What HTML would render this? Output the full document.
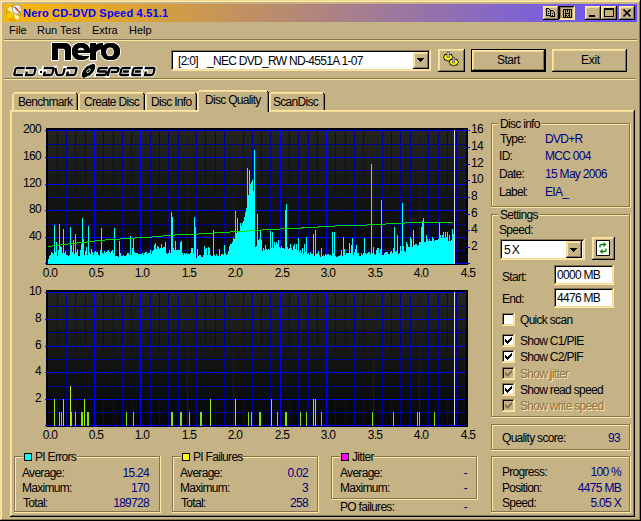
<!DOCTYPE html>
<html><head><meta charset="utf-8"><style>
html,body{margin:0;padding:0;width:641px;height:521px;overflow:hidden;background:#C5B386}
body>div{position:absolute}
.t{position:absolute;white-space:pre}
svg{position:absolute;overflow:visible}
</style></head><body>
<div style="left:0px;top:0px;width:641px;height:521px;background:#C5B386;"></div>
<div style="left:0px;top:0px;width:640px;height:1px;background:#F4DA96;"></div>
<div style="left:0px;top:0px;width:1px;height:520px;background:#F4DA96;"></div>
<div style="left:0px;top:520px;width:641px;height:1px;background:#000000;"></div>
<div style="left:640px;top:0px;width:1px;height:521px;background:#000000;"></div>
<div style="left:1px;top:1px;width:638px;height:1px;background:#FFE7A4;"></div>
<div style="left:1px;top:1px;width:1px;height:518px;background:#FFE7A4;"></div>
<div style="left:1px;top:519px;width:639px;height:1px;background:#857652;"></div>
<div style="left:639px;top:1px;width:1px;height:519px;background:#857652;"></div>
<div style="left:4px;top:4px;width:633px;height:18px;background:#C5B386;background:linear-gradient(to right,#FAB800,#6450FF);"></div>
<svg style="left:5px;top:5px" width="17" height="17" viewBox="0 0 17 17">
<circle cx="8.5" cy="8.2" r="7.3" fill="#E8B800" stroke="#A88000" stroke-width="0.7"/>
<path d="M8.5 8.2 L2.2 4.5 A7.3 7.3 0 0 1 6 1.3 Z" fill="#FFF5B0"/>
<path d="M8.5 8.2 L14.8 11.9 A7.3 7.3 0 0 1 11 15.1 Z" fill="#FFF5B0"/>
<path d="M8.5 8.2 L1.2 8.6 A7.3 7.3 0 0 0 4 14 Z" fill="#F8D000"/>
<circle cx="12" cy="4.4" r="4.6" fill="#EEF0F4" stroke="#8090A0" stroke-width="0.7"/>
<path d="M10 2.3 L13.6 6.2" stroke="#E02000" stroke-width="1.3"/>
<circle cx="14.2" cy="6.8" r="0.9" fill="#E02000"/>
<circle cx="9" cy="2.5" r="0.5" fill="#E06040"/><circle cx="15" cy="3" r="0.5" fill="#E06040"/>
</svg>
<div class="t" style="left:23px;top:7px;color:#0000FF;font:bold 11px/13px 'Liberation Sans',sans-serif;letter-spacing:0.2px;">Nero CD-DVD Speed 4.51.1</div>
<div style="left:543px;top:6px;width:16px;height:14px;background:#C5B386;"></div>
<div style="left:543px;top:6px;width:15px;height:1px;background:#FFE7A4;"></div>
<div style="left:543px;top:6px;width:1px;height:13px;background:#FFE7A4;"></div>
<div style="left:543px;top:19px;width:16px;height:1px;background:#000000;"></div>
<div style="left:558px;top:6px;width:1px;height:14px;background:#000000;"></div>
<div style="left:544px;top:7px;width:13px;height:1px;background:#F4DA96;"></div>
<div style="left:544px;top:7px;width:1px;height:11px;background:#F4DA96;"></div>
<div style="left:544px;top:18px;width:14px;height:1px;background:#857652;"></div>
<div style="left:557px;top:7px;width:1px;height:12px;background:#857652;"></div>
<div style="left:559px;top:6px;width:16px;height:14px;background:#C5B386;"></div>
<div style="left:559px;top:6px;width:15px;height:1px;background:#000000;"></div>
<div style="left:559px;top:6px;width:1px;height:13px;background:#000000;"></div>
<div style="left:559px;top:19px;width:16px;height:1px;background:#FFE7A4;"></div>
<div style="left:574px;top:6px;width:1px;height:14px;background:#FFE7A4;"></div>
<div style="left:560px;top:7px;width:13px;height:1px;background:#857652;"></div>
<div style="left:560px;top:7px;width:1px;height:11px;background:#857652;"></div>
<div style="left:560px;top:18px;width:14px;height:1px;background:#F4DA96;"></div>
<div style="left:573px;top:7px;width:1px;height:12px;background:#F4DA96;"></div>
<div style="left:585px;top:6px;width:16px;height:14px;background:#C5B386;"></div>
<div style="left:585px;top:6px;width:15px;height:1px;background:#FFE7A4;"></div>
<div style="left:585px;top:6px;width:1px;height:13px;background:#FFE7A4;"></div>
<div style="left:585px;top:19px;width:16px;height:1px;background:#000000;"></div>
<div style="left:600px;top:6px;width:1px;height:14px;background:#000000;"></div>
<div style="left:586px;top:7px;width:13px;height:1px;background:#F4DA96;"></div>
<div style="left:586px;top:7px;width:1px;height:11px;background:#F4DA96;"></div>
<div style="left:586px;top:18px;width:14px;height:1px;background:#857652;"></div>
<div style="left:599px;top:7px;width:1px;height:12px;background:#857652;"></div>
<div style="left:601px;top:6px;width:16px;height:14px;background:#C5B386;"></div>
<div style="left:601px;top:6px;width:15px;height:1px;background:#FFE7A4;"></div>
<div style="left:601px;top:6px;width:1px;height:13px;background:#FFE7A4;"></div>
<div style="left:601px;top:19px;width:16px;height:1px;background:#000000;"></div>
<div style="left:616px;top:6px;width:1px;height:14px;background:#000000;"></div>
<div style="left:602px;top:7px;width:13px;height:1px;background:#F4DA96;"></div>
<div style="left:602px;top:7px;width:1px;height:11px;background:#F4DA96;"></div>
<div style="left:602px;top:18px;width:14px;height:1px;background:#857652;"></div>
<div style="left:615px;top:7px;width:1px;height:12px;background:#857652;"></div>
<div style="left:619px;top:6px;width:16px;height:14px;background:#C5B386;"></div>
<div style="left:619px;top:6px;width:15px;height:1px;background:#FFE7A4;"></div>
<div style="left:619px;top:6px;width:1px;height:13px;background:#FFE7A4;"></div>
<div style="left:619px;top:19px;width:16px;height:1px;background:#000000;"></div>
<div style="left:634px;top:6px;width:1px;height:14px;background:#000000;"></div>
<div style="left:620px;top:7px;width:13px;height:1px;background:#F4DA96;"></div>
<div style="left:620px;top:7px;width:1px;height:11px;background:#F4DA96;"></div>
<div style="left:620px;top:18px;width:14px;height:1px;background:#857652;"></div>
<div style="left:633px;top:7px;width:1px;height:12px;background:#857652;"></div>
<svg style="left:0;top:0" width="641" height="30" shape-rendering="crispEdges"><g fill="#000"><rect x="546" y="8" width="1" height="1"/><rect x="547" y="8" width="1" height="1"/><rect x="548" y="8" width="1" height="1"/><rect x="549" y="9" width="1" height="1"/><rect x="550" y="10" width="1" height="1"/><rect x="550" y="11" width="1" height="1"/><rect x="550" y="12" width="1" height="1"/><rect x="550" y="13" width="1" height="1"/><rect x="550" y="14" width="1" height="1"/><rect x="550" y="15" width="1" height="1"/><rect x="546" y="15" width="1" height="1"/><rect x="547" y="15" width="1" height="1"/><rect x="548" y="15" width="1" height="1"/><rect x="549" y="15" width="1" height="1"/><rect x="550" y="15" width="1" height="1"/><rect x="546" y="8" width="1" height="1"/><rect x="546" y="9" width="1" height="1"/><rect x="546" y="10" width="1" height="1"/><rect x="546" y="11" width="1" height="1"/><rect x="546" y="12" width="1" height="1"/><rect x="546" y="13" width="1" height="1"/><rect x="546" y="14" width="1" height="1"/><rect x="546" y="15" width="1" height="1"/><rect x="548" y="11" width="1" height="1"/><rect x="548" y="13" width="1" height="1"/><rect x="550" y="10" width="1" height="1"/><rect x="551" y="10" width="1" height="1"/><rect x="552" y="10" width="1" height="1"/><rect x="553" y="11" width="1" height="1"/><rect x="554" y="12" width="1" height="1"/><rect x="554" y="13" width="1" height="1"/><rect x="554" y="14" width="1" height="1"/><rect x="554" y="15" width="1" height="1"/><rect x="554" y="16" width="1" height="1"/><rect x="550" y="16" width="1" height="1"/><rect x="551" y="16" width="1" height="1"/><rect x="552" y="16" width="1" height="1"/><rect x="553" y="16" width="1" height="1"/><rect x="554" y="16" width="1" height="1"/><rect x="550" y="10" width="1" height="1"/><rect x="550" y="11" width="1" height="1"/><rect x="550" y="12" width="1" height="1"/><rect x="550" y="13" width="1" height="1"/><rect x="550" y="14" width="1" height="1"/><rect x="550" y="15" width="1" height="1"/><rect x="550" y="16" width="1" height="1"/><rect x="552" y="13" width="1" height="1"/><rect x="552" y="15" width="1" height="1"/><rect x="563" y="9" width="1" height="1"/><rect x="564" y="9" width="1" height="1"/><rect x="565" y="9" width="1" height="1"/><rect x="566" y="9" width="1" height="1"/><rect x="567" y="9" width="1" height="1"/><rect x="568" y="9" width="1" height="1"/><rect x="569" y="9" width="1" height="1"/><rect x="570" y="9" width="1" height="1"/><rect x="571" y="9" width="1" height="1"/><rect x="563" y="17" width="1" height="1"/><rect x="564" y="17" width="1" height="1"/><rect x="565" y="17" width="1" height="1"/><rect x="566" y="17" width="1" height="1"/><rect x="567" y="17" width="1" height="1"/><rect x="568" y="17" width="1" height="1"/><rect x="569" y="17" width="1" height="1"/><rect x="570" y="17" width="1" height="1"/><rect x="571" y="17" width="1" height="1"/><rect x="563" y="9" width="1" height="1"/><rect x="563" y="10" width="1" height="1"/><rect x="563" y="11" width="1" height="1"/><rect x="563" y="12" width="1" height="1"/><rect x="563" y="13" width="1" height="1"/><rect x="563" y="14" width="1" height="1"/><rect x="563" y="15" width="1" height="1"/><rect x="563" y="16" width="1" height="1"/><rect x="563" y="17" width="1" height="1"/><rect x="571" y="9" width="1" height="1"/><rect x="571" y="10" width="1" height="1"/><rect x="571" y="11" width="1" height="1"/><rect x="571" y="12" width="1" height="1"/><rect x="571" y="13" width="1" height="1"/><rect x="571" y="14" width="1" height="1"/><rect x="571" y="15" width="1" height="1"/><rect x="571" y="16" width="1" height="1"/><rect x="571" y="17" width="1" height="1"/><rect x="565" y="10" width="1" height="1"/><rect x="565" y="11" width="1" height="1"/><rect x="565" y="12" width="1" height="1"/><rect x="565" y="13" width="1" height="1"/><rect x="565" y="14" width="1" height="1"/><rect x="565" y="15" width="1" height="1"/><rect x="565" y="16" width="1" height="1"/><rect x="569" y="10" width="1" height="1"/><rect x="569" y="11" width="1" height="1"/><rect x="569" y="12" width="1" height="1"/><rect x="569" y="13" width="1" height="1"/><rect x="569" y="14" width="1" height="1"/><rect x="569" y="15" width="1" height="1"/><rect x="569" y="16" width="1" height="1"/><rect x="565" y="13" width="1" height="1"/><rect x="566" y="13" width="1" height="1"/><rect x="567" y="13" width="1" height="1"/><rect x="568" y="13" width="1" height="1"/><rect x="569" y="13" width="1" height="1"/><rect x="567" y="10" width="1" height="1"/><rect x="567" y="11" width="1" height="1"/><rect x="566" y="15" width="1" height="1"/><rect x="567" y="16" width="1" height="1"/><rect x="568" y="15" width="1" height="1"/></g></svg>
<div style="left:589px;top:15px;width:6px;height:2px;background:#000;"></div>
<svg style="left:601px;top:6px" width="16" height="14" viewBox="0 0 16 14" shape-rendering="crispEdges">
<path d="M3.5 2.5h9v8h-9z" fill="none" stroke="#000" stroke-width="1"/><rect x="3" y="2" width="10" height="2" fill="#000"/>
</svg>
<svg style="left:619px;top:6px" width="16" height="14" viewBox="0 0 16 14">
<path d="M4.5 3.5 L11.5 10.5 M11.5 3.5 L4.5 10.5" stroke="#000" stroke-width="1.7"/>
</svg>
<div class="t" style="left:9px;top:24px;color:#000;font:11px/13px 'Liberation Sans',sans-serif;letter-spacing:0px;">File</div>
<div class="t" style="left:37px;top:24px;color:#000;font:11px/13px 'Liberation Sans',sans-serif;letter-spacing:0px;">Run Test</div>
<div class="t" style="left:92px;top:24px;color:#000;font:11px/13px 'Liberation Sans',sans-serif;letter-spacing:0px;">Extra</div>
<div class="t" style="left:129px;top:24px;color:#000;font:11px/13px 'Liberation Sans',sans-serif;letter-spacing:0px;">Help</div>
<div style="left:4px;top:39px;width:633px;height:1px;background:#857652;"></div>
<div style="left:4px;top:40px;width:633px;height:1px;background:#FFE7A4;"></div>
<svg style="left:0;top:0" width="170" height="82" viewBox="0 0 170 82">
<path d="M52 60V43H64.5Q71 43 71 49.5V60H65V50.5Q65 48.5 63 48.5H58V60ZM90 53V52Q90 43 81 43Q72 43 72 51.5Q72 60 81 60Q87 60 89.5 56H83Q82 55.5 81 55.5Q78 55.5 77.5 53ZM77.6 50.5Q78 47.5 81 47.5Q84 47.5 84.4 50.5ZM90 60V43H96V45Q98 43 103 43V49Q98 49 96 52V60ZM110.5 43Q120 43 120 51.5Q120 60 110.5 60Q101 60 101 51.5Q101 43 110.5 43ZM110 47.3Q106 47.3 106 51.8Q106 56.5 110 56.5Q114 56.5 114 51.8Q114 47.3 110 47.3Z" fill="#000" stroke="#fff" stroke-width="2" stroke-linejoin="round" paint-order="stroke"/>
<path d="M52 60V43H64.5Q71 43 71 49.5V60H65V50.5Q65 48.5 63 48.5H58V60ZM90 53V52Q90 43 81 43Q72 43 72 51.5Q72 60 81 60Q87 60 89.5 56H83Q82 55.5 81 55.5Q78 55.5 77.5 53ZM77.6 50.5Q78 47.5 81 47.5Q84 47.5 84.4 50.5ZM90 60V43H96V45Q98 43 103 43V49Q98 49 96 52V60ZM110.5 43Q120 43 120 51.5Q120 60 110.5 60Q101 60 101 51.5Q101 43 110.5 43ZM110 47.3Q106 47.3 106 51.8Q106 56.5 110 56.5Q114 56.5 114 51.8Q114 47.3 110 47.3Z" fill="#000"/>
<g fill="none" stroke="#fff" stroke-width="4" stroke-linejoin="round" stroke-linecap="square"><path transform="translate(15,67) skewX(-14)" d="M10 1H2.5Q1 1 1 2.5V6.5Q1 8 2.5 8H10"/><path transform="translate(26,67) skewX(-14)" d="M0 1H8.5Q10 1 10 2.5V6.5Q10 8 8.5 8H2V4.5"/><path transform="translate(44,67) skewX(-14)" d="M0 1H8.5Q10 1 10 2.5V6.5Q10 8 8.5 8H2V4.5"/><path transform="translate(55,67) skewX(-14)" d="M0.5 1L3.5 7Q4 8 5.5 8H8.5Q10 8 10 6.5V1"/><path transform="translate(67,67) skewX(-14)" d="M0 1H8.5Q10 1 10 2.5V6.5Q10 8 8.5 8H2V4.5"/><path transform="translate(98,67) skewX(-14)" d="M10 1H2.5Q1 1 1 2.5V3Q1 4.5 2.5 4.5H8.5Q10 4.5 10 6V6.5Q10 8 8.5 8H0"/><path transform="translate(109,67) skewX(-14)" d="M1 9V2.5Q1 1 2.5 1H8.5Q10 1 10 2.5V3.5Q10 5 8.5 5H3"/><path transform="translate(121,67) skewX(-14)" d="M10 1H2.5Q1 1 1 2.5V6.5Q1 8 2.5 8H10M3 4.5H9"/><path transform="translate(133,67) skewX(-14)" d="M10 1H2.5Q1 1 1 2.5V6.5Q1 8 2.5 8H10M3 4.5H9"/><path transform="translate(145,67) skewX(-14)" d="M0 1H8.5Q10 1 10 2.5V6.5Q10 8 8.5 8H2V4.5"/><rect x="40" y="71" width="2" height="2"/></g>
<g fill="none" stroke="#000" stroke-width="2.3" stroke-linecap="butt"><path transform="translate(15,67) skewX(-14)" d="M10 1H2.5Q1 1 1 2.5V6.5Q1 8 2.5 8H10"/><path transform="translate(26,67) skewX(-14)" d="M0 1H8.5Q10 1 10 2.5V6.5Q10 8 8.5 8H2V4.5"/><path transform="translate(44,67) skewX(-14)" d="M0 1H8.5Q10 1 10 2.5V6.5Q10 8 8.5 8H2V4.5"/><path transform="translate(55,67) skewX(-14)" d="M0.5 1L3.5 7Q4 8 5.5 8H8.5Q10 8 10 6.5V1"/><path transform="translate(67,67) skewX(-14)" d="M0 1H8.5Q10 1 10 2.5V6.5Q10 8 8.5 8H2V4.5"/><path transform="translate(98,67) skewX(-14)" d="M10 1H2.5Q1 1 1 2.5V3Q1 4.5 2.5 4.5H8.5Q10 4.5 10 6V6.5Q10 8 8.5 8H0"/><path transform="translate(109,67) skewX(-14)" d="M1 9V2.5Q1 1 2.5 1H8.5Q10 1 10 2.5V3.5Q10 5 8.5 5H3"/><path transform="translate(121,67) skewX(-14)" d="M10 1H2.5Q1 1 1 2.5V6.5Q1 8 2.5 8H10M3 4.5H9"/><path transform="translate(133,67) skewX(-14)" d="M10 1H2.5Q1 1 1 2.5V6.5Q1 8 2.5 8H10M3 4.5H9"/><path transform="translate(145,67) skewX(-14)" d="M0 1H8.5Q10 1 10 2.5V6.5Q10 8 8.5 8H2V4.5"/></g>
<rect x="40" y="71" width="2" height="2" fill="#000"/>
<g transform="translate(88.5,70.8) rotate(-47)">
<ellipse rx="9.4" ry="4.9" fill="#000" stroke="#fff" stroke-width="1.1"/>
<ellipse cx="0" cy="0" rx="2.3" ry="1.2" fill="none" stroke="#fff" stroke-width="0.8"/>
<path d="M3.5 -3.6Q6 -3.3 7.5 -2" fill="none" stroke="#ddd" stroke-width="0.9"/>
<path d="M-3.5 3.6Q-6 3.3 -7.5 2" fill="none" stroke="#ddd" stroke-width="0.9"/>
</g>
</svg>
<div style="left:171px;top:50px;width:260px;height:21px;background:#FFFFFF;"></div>
<div style="left:171px;top:50px;width:259px;height:1px;background:#857652;"></div>
<div style="left:171px;top:50px;width:1px;height:20px;background:#857652;"></div>
<div style="left:171px;top:70px;width:260px;height:1px;background:#FFE7A4;"></div>
<div style="left:430px;top:50px;width:1px;height:21px;background:#FFE7A4;"></div>
<div style="left:172px;top:51px;width:257px;height:1px;background:#000000;"></div>
<div style="left:172px;top:51px;width:1px;height:18px;background:#000000;"></div>
<div style="left:172px;top:69px;width:258px;height:1px;background:#F4DA96;"></div>
<div style="left:429px;top:51px;width:1px;height:19px;background:#F4DA96;"></div>
<div class="t" style="left:178px;top:55px;color:#000;font:12px/13px 'Liberation Sans',sans-serif;letter-spacing:-0.7px;">[2:0]</div>
<div class="t" style="left:207px;top:55px;color:#000;font:12px/13px 'Liberation Sans',sans-serif;letter-spacing:-0.7px;">_NEC DVD_RW ND-4551A 1-07</div>
<div style="left:413px;top:52px;width:16px;height:17px;background:#C5B386;"></div>
<div style="left:413px;top:52px;width:15px;height:1px;background:#F4DA96;"></div>
<div style="left:413px;top:52px;width:1px;height:16px;background:#F4DA96;"></div>
<div style="left:413px;top:68px;width:16px;height:1px;background:#000000;"></div>
<div style="left:428px;top:52px;width:1px;height:17px;background:#000000;"></div>
<div style="left:414px;top:53px;width:13px;height:1px;background:#FFE7A4;"></div>
<div style="left:414px;top:53px;width:1px;height:14px;background:#FFE7A4;"></div>
<div style="left:414px;top:67px;width:14px;height:1px;background:#857652;"></div>
<div style="left:427px;top:53px;width:1px;height:15px;background:#857652;"></div>
<svg style="left:417px;top:58px" width="7" height="4" shape-rendering="crispEdges"><path d="M0 0h7v1h-1v1h-1v1h-1v1h-1v-1h-1v-1h-1v-1h-1z" fill="#000"/></svg>
<div style="left:438px;top:49px;width:27px;height:23px;background:#C5B386;"></div>
<div style="left:438px;top:49px;width:26px;height:1px;background:#FFE7A4;"></div>
<div style="left:438px;top:49px;width:1px;height:22px;background:#FFE7A4;"></div>
<div style="left:438px;top:71px;width:27px;height:1px;background:#000000;"></div>
<div style="left:464px;top:49px;width:1px;height:23px;background:#000000;"></div>
<div style="left:439px;top:50px;width:24px;height:1px;background:#F4DA96;"></div>
<div style="left:439px;top:50px;width:1px;height:20px;background:#F4DA96;"></div>
<div style="left:439px;top:70px;width:25px;height:1px;background:#857652;"></div>
<div style="left:463px;top:50px;width:1px;height:21px;background:#857652;"></div>
<svg style="left:0;top:0" width="641" height="80" viewBox="0 0 641 80">
<polygon points="453.20,57.30 451.80,58.46 451.74,60.06 449.69,60.11 448.20,61.20 446.71,60.11 444.66,60.06 444.60,58.46 443.20,57.30 444.60,56.14 444.66,54.54 446.71,54.49 448.20,53.40 449.69,54.49 451.74,54.54 451.80,56.14" fill="#FFFF00" stroke="#000" stroke-width="0.9" stroke-linejoin="round"/>
<rect x="447" y="52" width="2.4" height="5.6" fill="#B8B8C8" stroke="#404050" stroke-width="0.6"/>
<polygon points="458.80,62.20 457.40,63.36 457.34,64.96 455.29,65.01 453.80,66.10 452.31,65.01 450.26,64.96 450.20,63.36 448.80,62.20 450.20,61.04 450.26,59.44 452.31,59.39 453.80,58.30 455.29,59.39 457.34,59.44 457.40,61.04" fill="#FFFF00" stroke="#000" stroke-width="0.9" stroke-linejoin="round"/>
<rect x="452.4" y="57.3" width="2.4" height="5.6" fill="#B8B8C8" stroke="#404050" stroke-width="0.6"/>
</svg>
<div style="left:471px;top:49px;width:75px;height:23px;background:#000000;"></div>
<div style="left:472px;top:50px;width:73px;height:21px;background:#C5B386;"></div>
<div style="left:472px;top:50px;width:72px;height:1px;background:#FFE7A4;"></div>
<div style="left:472px;top:50px;width:1px;height:20px;background:#FFE7A4;"></div>
<div style="left:472px;top:70px;width:73px;height:1px;background:#000000;"></div>
<div style="left:544px;top:50px;width:1px;height:21px;background:#000000;"></div>
<div style="left:473px;top:51px;width:70px;height:1px;background:#F4DA96;"></div>
<div style="left:473px;top:51px;width:1px;height:18px;background:#F4DA96;"></div>
<div style="left:473px;top:69px;width:71px;height:1px;background:#857652;"></div>
<div style="left:543px;top:51px;width:1px;height:19px;background:#857652;"></div>
<div class="t" style="left:497px;top:54px;color:#000;font:12px/13px 'Liberation Sans',sans-serif;letter-spacing:-0.5px;">Start</div>
<div style="left:552px;top:49px;width:75px;height:23px;background:#C5B386;"></div>
<div style="left:552px;top:49px;width:74px;height:1px;background:#FFE7A4;"></div>
<div style="left:552px;top:49px;width:1px;height:22px;background:#FFE7A4;"></div>
<div style="left:552px;top:71px;width:75px;height:1px;background:#000000;"></div>
<div style="left:626px;top:49px;width:1px;height:23px;background:#000000;"></div>
<div style="left:553px;top:50px;width:72px;height:1px;background:#F4DA96;"></div>
<div style="left:553px;top:50px;width:1px;height:20px;background:#F4DA96;"></div>
<div style="left:553px;top:70px;width:73px;height:1px;background:#857652;"></div>
<div style="left:625px;top:50px;width:1px;height:21px;background:#857652;"></div>
<div class="t" style="left:581px;top:54px;color:#000;font:12px/13px 'Liberation Sans',sans-serif;letter-spacing:-0.3px;">Exit</div>
<div style="left:4px;top:78px;width:631px;height:1px;background:#857652;"></div>
<div style="left:4px;top:79px;width:631px;height:1px;background:#FFE7A4;"></div>
<div style="left:10px;top:110px;width:625px;height:407px;background:#C5B386;"></div>
<div style="left:10px;top:110px;width:624px;height:1px;background:#FFE7A4;"></div>
<div style="left:11px;top:111px;width:622px;height:1px;background:#F4DA96;"></div>
<div style="left:10px;top:110px;width:1px;height:406px;background:#FFE7A4;"></div>
<div style="left:11px;top:111px;width:1px;height:404px;background:#F4DA96;"></div>
<div style="left:10px;top:516px;width:625px;height:1px;background:#000000;"></div>
<div style="left:11px;top:515px;width:623px;height:1px;background:#857652;"></div>
<div style="left:634px;top:110px;width:1px;height:407px;background:#000000;"></div>
<div style="left:633px;top:111px;width:1px;height:405px;background:#857652;"></div>
<div style="left:12px;top:92px;width:66px;height:18px;background:#C5B386;"></div>
<div style="left:14px;top:92px;width:62px;height:1px;background:#FFE7A4;"></div>
<div style="left:13px;top:93px;width:1px;height:1px;background:#FFE7A4;"></div>
<div style="left:12px;top:94px;width:1px;height:16px;background:#FFE7A4;"></div>
<div style="left:13px;top:94px;width:1px;height:16px;background:#F4DA96;"></div>
<div style="left:14px;top:93px;width:62px;height:1px;background:#F4DA96;"></div>
<div style="left:76px;top:94px;width:1px;height:16px;background:#857652;"></div>
<div style="left:77px;top:94px;width:1px;height:16px;background:#000000;"></div>
<div style="left:76px;top:93px;width:1px;height:1px;background:#000000;"></div>
<div class="t" style="left:18px;top:96px;color:#000;font:12px/13px 'Liberation Sans',sans-serif;letter-spacing:-0.7px;">Benchmark</div>
<div style="left:78px;top:92px;width:67px;height:18px;background:#C5B386;"></div>
<div style="left:80px;top:92px;width:63px;height:1px;background:#FFE7A4;"></div>
<div style="left:79px;top:93px;width:1px;height:1px;background:#FFE7A4;"></div>
<div style="left:78px;top:94px;width:1px;height:16px;background:#FFE7A4;"></div>
<div style="left:79px;top:94px;width:1px;height:16px;background:#F4DA96;"></div>
<div style="left:80px;top:93px;width:63px;height:1px;background:#F4DA96;"></div>
<div style="left:143px;top:94px;width:1px;height:16px;background:#857652;"></div>
<div style="left:144px;top:94px;width:1px;height:16px;background:#000000;"></div>
<div style="left:143px;top:93px;width:1px;height:1px;background:#000000;"></div>
<div class="t" style="left:84px;top:96px;color:#000;font:12px/13px 'Liberation Sans',sans-serif;letter-spacing:-0.7px;">Create Disc</div>
<div style="left:145px;top:92px;width:52px;height:18px;background:#C5B386;"></div>
<div style="left:147px;top:92px;width:48px;height:1px;background:#FFE7A4;"></div>
<div style="left:146px;top:93px;width:1px;height:1px;background:#FFE7A4;"></div>
<div style="left:145px;top:94px;width:1px;height:16px;background:#FFE7A4;"></div>
<div style="left:146px;top:94px;width:1px;height:16px;background:#F4DA96;"></div>
<div style="left:147px;top:93px;width:48px;height:1px;background:#F4DA96;"></div>
<div style="left:195px;top:94px;width:1px;height:16px;background:#857652;"></div>
<div style="left:196px;top:94px;width:1px;height:16px;background:#000000;"></div>
<div style="left:195px;top:93px;width:1px;height:1px;background:#000000;"></div>
<div class="t" style="left:151px;top:96px;color:#000;font:12px/13px 'Liberation Sans',sans-serif;letter-spacing:-0.7px;">Disc Info</div>
<div style="left:269px;top:92px;width:56px;height:18px;background:#C5B386;"></div>
<div style="left:271px;top:92px;width:52px;height:1px;background:#FFE7A4;"></div>
<div style="left:270px;top:93px;width:1px;height:1px;background:#FFE7A4;"></div>
<div style="left:269px;top:94px;width:1px;height:16px;background:#FFE7A4;"></div>
<div style="left:270px;top:94px;width:1px;height:16px;background:#F4DA96;"></div>
<div style="left:271px;top:93px;width:52px;height:1px;background:#F4DA96;"></div>
<div style="left:323px;top:94px;width:1px;height:16px;background:#857652;"></div>
<div style="left:324px;top:94px;width:1px;height:16px;background:#000000;"></div>
<div style="left:323px;top:93px;width:1px;height:1px;background:#000000;"></div>
<div class="t" style="left:273px;top:96px;color:#000;font:12px/13px 'Liberation Sans',sans-serif;letter-spacing:-0.7px;">ScanDisc</div>
<div style="left:197px;top:90px;width:72px;height:22px;background:#C5B386;"></div>
<div style="left:199px;top:90px;width:68px;height:1px;background:#FFE7A4;"></div>
<div style="left:198px;top:91px;width:1px;height:1px;background:#FFE7A4;"></div>
<div style="left:197px;top:92px;width:1px;height:20px;background:#FFE7A4;"></div>
<div style="left:198px;top:92px;width:1px;height:20px;background:#F4DA96;"></div>
<div style="left:199px;top:91px;width:68px;height:1px;background:#F4DA96;"></div>
<div style="left:267px;top:92px;width:1px;height:20px;background:#857652;"></div>
<div style="left:268px;top:92px;width:1px;height:20px;background:#000000;"></div>
<div style="left:267px;top:91px;width:1px;height:1px;background:#000000;"></div>
<div class="t" style="left:205px;top:94px;color:#000;font:12px/13px 'Liberation Sans',sans-serif;letter-spacing:-0.7px;">Disc Quality</div>
<svg style="position:absolute;left:0;top:0" width="641" height="521" viewBox="0 0 641 521" shape-rendering="crispEdges">
<defs><linearGradient id="bg" x1="0" y1="0" x2="0" y2="1"><stop offset="0" stop-color="#242421"/><stop offset="1" stop-color="#060606"/></linearGradient></defs>
<rect x="46" y="128" width="422" height="137" fill="#000"/>
<rect x="48" y="130" width="418" height="134" fill="url(#bg)"/>
<rect x="57" y="130" width="1" height="135" fill="#000094"/>
<rect x="66" y="130" width="1" height="135" fill="#000094"/>
<rect x="75" y="130" width="1" height="135" fill="#000094"/>
<rect x="85" y="130" width="1" height="135" fill="#000094"/>
<rect x="94" y="130" width="1" height="135" fill="#0000FF"/>
<rect x="103" y="130" width="1" height="135" fill="#000094"/>
<rect x="113" y="130" width="1" height="135" fill="#000094"/>
<rect x="122" y="130" width="1" height="135" fill="#000094"/>
<rect x="131" y="130" width="1" height="135" fill="#000094"/>
<rect x="140" y="130" width="1" height="135" fill="#0000FF"/>
<rect x="150" y="130" width="1" height="135" fill="#000094"/>
<rect x="159" y="130" width="1" height="135" fill="#000094"/>
<rect x="168" y="130" width="1" height="135" fill="#000094"/>
<rect x="178" y="130" width="1" height="135" fill="#000094"/>
<rect x="187" y="130" width="1" height="135" fill="#0000FF"/>
<rect x="196" y="130" width="1" height="135" fill="#000094"/>
<rect x="205" y="130" width="1" height="135" fill="#000094"/>
<rect x="215" y="130" width="1" height="135" fill="#000094"/>
<rect x="224" y="130" width="1" height="135" fill="#000094"/>
<rect x="233" y="130" width="1" height="135" fill="#0000FF"/>
<rect x="243" y="130" width="1" height="135" fill="#000094"/>
<rect x="252" y="130" width="1" height="135" fill="#000094"/>
<rect x="261" y="130" width="1" height="135" fill="#000094"/>
<rect x="270" y="130" width="1" height="135" fill="#000094"/>
<rect x="280" y="130" width="1" height="135" fill="#0000FF"/>
<rect x="289" y="130" width="1" height="135" fill="#000094"/>
<rect x="298" y="130" width="1" height="135" fill="#000094"/>
<rect x="308" y="130" width="1" height="135" fill="#000094"/>
<rect x="317" y="130" width="1" height="135" fill="#000094"/>
<rect x="326" y="130" width="1" height="135" fill="#0000FF"/>
<rect x="335" y="130" width="1" height="135" fill="#000094"/>
<rect x="345" y="130" width="1" height="135" fill="#000094"/>
<rect x="354" y="130" width="1" height="135" fill="#000094"/>
<rect x="363" y="130" width="1" height="135" fill="#000094"/>
<rect x="373" y="130" width="1" height="135" fill="#0000FF"/>
<rect x="382" y="130" width="1" height="135" fill="#000094"/>
<rect x="391" y="130" width="1" height="135" fill="#000094"/>
<rect x="400" y="130" width="1" height="135" fill="#000094"/>
<rect x="410" y="130" width="1" height="135" fill="#000094"/>
<rect x="419" y="130" width="1" height="135" fill="#0000FF"/>
<rect x="428" y="130" width="1" height="135" fill="#000094"/>
<rect x="438" y="130" width="1" height="135" fill="#000094"/>
<rect x="447" y="130" width="1" height="135" fill="#000094"/>
<rect x="456" y="130" width="1" height="135" fill="#000094"/>
<rect x="45" y="263" width="421" height="1" fill="#0000FF"/>
<rect x="46" y="250" width="420" height="1" fill="#000094"/>
<rect x="45" y="237" width="421" height="1" fill="#0000FF"/>
<rect x="46" y="224" width="420" height="1" fill="#000094"/>
<rect x="45" y="210" width="421" height="1" fill="#0000FF"/>
<rect x="46" y="197" width="420" height="1" fill="#000094"/>
<rect x="45" y="184" width="421" height="1" fill="#0000FF"/>
<rect x="46" y="170" width="420" height="1" fill="#000094"/>
<rect x="45" y="157" width="421" height="1" fill="#0000FF"/>
<rect x="46" y="144" width="420" height="1" fill="#000094"/>
<rect x="45" y="130" width="421" height="1" fill="#0000FF"/>
<rect x="46" y="290" width="422" height="137" fill="#000"/>
<rect x="48" y="292" width="418" height="134" fill="url(#bg)"/>
<rect x="57" y="292" width="1" height="135" fill="#000094"/>
<rect x="66" y="292" width="1" height="135" fill="#000094"/>
<rect x="75" y="292" width="1" height="135" fill="#000094"/>
<rect x="85" y="292" width="1" height="135" fill="#000094"/>
<rect x="94" y="292" width="1" height="135" fill="#0000FF"/>
<rect x="103" y="292" width="1" height="135" fill="#000094"/>
<rect x="113" y="292" width="1" height="135" fill="#000094"/>
<rect x="122" y="292" width="1" height="135" fill="#000094"/>
<rect x="131" y="292" width="1" height="135" fill="#000094"/>
<rect x="140" y="292" width="1" height="135" fill="#0000FF"/>
<rect x="150" y="292" width="1" height="135" fill="#000094"/>
<rect x="159" y="292" width="1" height="135" fill="#000094"/>
<rect x="168" y="292" width="1" height="135" fill="#000094"/>
<rect x="178" y="292" width="1" height="135" fill="#000094"/>
<rect x="187" y="292" width="1" height="135" fill="#0000FF"/>
<rect x="196" y="292" width="1" height="135" fill="#000094"/>
<rect x="205" y="292" width="1" height="135" fill="#000094"/>
<rect x="215" y="292" width="1" height="135" fill="#000094"/>
<rect x="224" y="292" width="1" height="135" fill="#000094"/>
<rect x="233" y="292" width="1" height="135" fill="#0000FF"/>
<rect x="243" y="292" width="1" height="135" fill="#000094"/>
<rect x="252" y="292" width="1" height="135" fill="#000094"/>
<rect x="261" y="292" width="1" height="135" fill="#000094"/>
<rect x="270" y="292" width="1" height="135" fill="#000094"/>
<rect x="280" y="292" width="1" height="135" fill="#0000FF"/>
<rect x="289" y="292" width="1" height="135" fill="#000094"/>
<rect x="298" y="292" width="1" height="135" fill="#000094"/>
<rect x="308" y="292" width="1" height="135" fill="#000094"/>
<rect x="317" y="292" width="1" height="135" fill="#000094"/>
<rect x="326" y="292" width="1" height="135" fill="#0000FF"/>
<rect x="335" y="292" width="1" height="135" fill="#000094"/>
<rect x="345" y="292" width="1" height="135" fill="#000094"/>
<rect x="354" y="292" width="1" height="135" fill="#000094"/>
<rect x="363" y="292" width="1" height="135" fill="#000094"/>
<rect x="373" y="292" width="1" height="135" fill="#0000FF"/>
<rect x="382" y="292" width="1" height="135" fill="#000094"/>
<rect x="391" y="292" width="1" height="135" fill="#000094"/>
<rect x="400" y="292" width="1" height="135" fill="#000094"/>
<rect x="410" y="292" width="1" height="135" fill="#000094"/>
<rect x="419" y="292" width="1" height="135" fill="#0000FF"/>
<rect x="428" y="292" width="1" height="135" fill="#000094"/>
<rect x="438" y="292" width="1" height="135" fill="#000094"/>
<rect x="447" y="292" width="1" height="135" fill="#000094"/>
<rect x="456" y="292" width="1" height="135" fill="#000094"/>
<rect x="45" y="425" width="421" height="1" fill="#0000FF"/>
<rect x="46" y="412" width="420" height="1" fill="#000094"/>
<rect x="45" y="399" width="421" height="1" fill="#0000FF"/>
<rect x="46" y="386" width="420" height="1" fill="#000094"/>
<rect x="45" y="372" width="421" height="1" fill="#0000FF"/>
<rect x="46" y="359" width="420" height="1" fill="#000094"/>
<rect x="45" y="346" width="421" height="1" fill="#0000FF"/>
<rect x="46" y="332" width="420" height="1" fill="#000094"/>
<rect x="45" y="319" width="421" height="1" fill="#0000FF"/>
<rect x="46" y="306" width="420" height="1" fill="#000094"/>
<rect x="45" y="292" width="421" height="1" fill="#0000FF"/>
<path d="M48 259h1V264h-1ZM49 256h1V264h-1ZM50 255h1V264h-1ZM51 252h1V264h-1ZM52 253h1V264h-1ZM53 254h1V264h-1ZM54 225h1V264h-1ZM55 252h1V264h-1ZM56 242h1V264h-1ZM57 256h1V264h-1ZM58 250h1V264h-1ZM59 224h1V264h-1ZM60 246h1V264h-1ZM61 247h1V264h-1ZM62 253h1V264h-1ZM63 229h1V264h-1ZM64 253h1V264h-1ZM65 251h1V264h-1ZM66 255h1V264h-1ZM67 255h1V264h-1ZM68 256h1V264h-1ZM69 255h1V264h-1ZM70 227h1V264h-1ZM71 245h1V264h-1ZM72 252h1V264h-1ZM73 240h1V264h-1ZM74 254h1V264h-1ZM75 234h1V264h-1ZM76 252h1V264h-1ZM77 249h1V264h-1ZM78 256h1V264h-1ZM79 256h1V264h-1ZM80 250h1V264h-1ZM81 244h1V264h-1ZM82 218h1V264h-1ZM83 239h1V264h-1ZM84 255h1V264h-1ZM85 251h1V264h-1ZM86 247h1V264h-1ZM87 255h1V264h-1ZM88 226h1V264h-1ZM89 252h1V264h-1ZM90 254h1V264h-1ZM91 249h1V264h-1ZM92 252h1V264h-1ZM93 255h1V264h-1ZM94 252h1V264h-1ZM95 251h1V264h-1ZM96 252h1V264h-1ZM97 252h1V264h-1ZM98 255h1V264h-1ZM99 256h1V264h-1ZM100 250h1V264h-1ZM101 228h1V264h-1ZM102 253h1V264h-1ZM103 254h1V264h-1ZM104 251h1V264h-1ZM105 253h1V264h-1ZM106 252h1V264h-1ZM107 251h1V264h-1ZM108 250h1V264h-1ZM109 252h1V264h-1ZM110 253h1V264h-1ZM111 251h1V264h-1ZM112 250h1V264h-1ZM113 253h1V264h-1ZM114 228h1V264h-1ZM115 256h1V264h-1ZM116 256h1V264h-1ZM117 256h1V264h-1ZM118 257h1V264h-1ZM119 241h1V264h-1ZM120 253h1V264h-1ZM121 256h1V264h-1ZM122 256h1V264h-1ZM123 255h1V264h-1ZM124 256h1V264h-1ZM125 256h1V264h-1ZM126 255h1V264h-1ZM127 253h1V264h-1ZM128 253h1V264h-1ZM129 255h1V264h-1ZM130 236h1V264h-1ZM131 255h1V264h-1ZM132 248h1V264h-1ZM133 238h1V264h-1ZM134 252h1V264h-1ZM135 253h1V264h-1ZM136 253h1V264h-1ZM137 253h1V264h-1ZM138 254h1V264h-1ZM139 254h1V264h-1ZM140 254h1V264h-1ZM141 254h1V264h-1ZM142 253h1V264h-1ZM143 255h1V264h-1ZM144 253h1V264h-1ZM145 252h1V264h-1ZM146 252h1V264h-1ZM147 254h1V264h-1ZM148 253h1V264h-1ZM149 253h1V264h-1ZM150 250h1V264h-1ZM151 254h1V264h-1ZM152 251h1V264h-1ZM153 250h1V264h-1ZM154 245h1V264h-1ZM155 243h1V264h-1ZM156 249h1V264h-1ZM157 246h1V264h-1ZM158 247h1V264h-1ZM159 249h1V264h-1ZM160 248h1V264h-1ZM161 244h1V264h-1ZM162 248h1V264h-1ZM163 247h1V264h-1ZM164 247h1V264h-1ZM165 242h1V264h-1ZM166 253h1V264h-1ZM167 254h1V264h-1ZM168 253h1V264h-1ZM169 250h1V264h-1ZM170 253h1V264h-1ZM171 212h1V264h-1ZM172 217h1V264h-1ZM173 248h1V264h-1ZM174 250h1V264h-1ZM175 241h1V264h-1ZM176 250h1V264h-1ZM177 250h1V264h-1ZM178 250h1V264h-1ZM179 250h1V264h-1ZM180 242h1V264h-1ZM181 241h1V264h-1ZM182 253h1V264h-1ZM183 255h1V264h-1ZM184 253h1V264h-1ZM185 254h1V264h-1ZM186 253h1V264h-1ZM187 254h1V264h-1ZM188 254h1V264h-1ZM189 254h1V264h-1ZM190 253h1V264h-1ZM191 248h1V264h-1ZM192 248h1V264h-1ZM193 253h1V264h-1ZM194 217h1V264h-1ZM195 227h1V264h-1ZM196 258h1V264h-1ZM197 249h1V264h-1ZM198 256h1V264h-1ZM199 255h1V264h-1ZM200 255h1V264h-1ZM201 257h1V264h-1ZM202 257h1V264h-1ZM203 255h1V264h-1ZM204 246h1V264h-1ZM205 249h1V264h-1ZM206 248h1V264h-1ZM207 255h1V264h-1ZM208 247h1V264h-1ZM209 248h1V264h-1ZM210 255h1V264h-1ZM211 256h1V264h-1ZM212 256h1V264h-1ZM213 230h1V264h-1ZM214 255h1V264h-1ZM215 256h1V264h-1ZM216 254h1V264h-1ZM217 256h1V264h-1ZM218 256h1V264h-1ZM219 249h1V264h-1ZM220 256h1V264h-1ZM221 254h1V264h-1ZM222 254h1V264h-1ZM223 255h1V264h-1ZM224 245h1V264h-1ZM225 253h1V264h-1ZM226 255h1V264h-1ZM227 254h1V264h-1ZM228 251h1V264h-1ZM229 246h1V264h-1ZM230 244h1V264h-1ZM231 244h1V264h-1ZM232 242h1V264h-1ZM233 238h1V264h-1ZM234 239h1V264h-1ZM235 211h1V264h-1ZM236 233h1V264h-1ZM237 218h1V264h-1ZM238 231h1V264h-1ZM239 232h1V264h-1ZM240 223h1V264h-1ZM241 226h1V264h-1ZM242 223h1V264h-1ZM243 221h1V264h-1ZM244 217h1V264h-1ZM245 212h1V264h-1ZM246 208h1V264h-1ZM247 168h1V264h-1ZM248 195h1V264h-1ZM249 170h1V264h-1ZM250 184h1V264h-1ZM251 182h1V264h-1ZM252 180h1V264h-1ZM253 191h1V264h-1ZM254 150h1V264h-1ZM255 247h1V264h-1ZM256 246h1V264h-1ZM257 214h1V264h-1ZM258 240h1V264h-1ZM259 239h1V264h-1ZM260 231h1V264h-1ZM261 240h1V264h-1ZM262 251h1V264h-1ZM263 248h1V264h-1ZM264 250h1V264h-1ZM265 245h1V264h-1ZM266 249h1V264h-1ZM267 250h1V264h-1ZM268 249h1V264h-1ZM269 250h1V264h-1ZM270 231h1V264h-1ZM271 248h1V264h-1ZM272 232h1V264h-1ZM273 248h1V264h-1ZM274 242h1V264h-1ZM275 245h1V264h-1ZM276 242h1V264h-1ZM277 244h1V264h-1ZM278 240h1V264h-1ZM279 247h1V264h-1ZM280 248h1V264h-1ZM281 246h1V264h-1ZM282 248h1V264h-1ZM283 248h1V264h-1ZM284 249h1V264h-1ZM285 210h1V264h-1ZM286 204h1V264h-1ZM287 247h1V264h-1ZM288 249h1V264h-1ZM289 248h1V264h-1ZM290 244h1V264h-1ZM291 248h1V264h-1ZM292 250h1V264h-1ZM293 246h1V264h-1ZM294 244h1V264h-1ZM295 249h1V264h-1ZM296 244h1V264h-1ZM297 250h1V264h-1ZM298 238h1V264h-1ZM299 252h1V264h-1ZM300 250h1V264h-1ZM301 253h1V264h-1ZM302 248h1V264h-1ZM303 254h1V264h-1ZM304 244h1V264h-1ZM305 252h1V264h-1ZM306 237h1V264h-1ZM307 254h1V264h-1ZM308 253h1V264h-1ZM309 255h1V264h-1ZM310 252h1V264h-1ZM311 254h1V264h-1ZM312 254h1V264h-1ZM313 234h1V264h-1ZM314 256h1V264h-1ZM315 230h1V264h-1ZM316 254h1V264h-1ZM317 253h1V264h-1ZM318 251h1V264h-1ZM319 255h1V264h-1ZM320 257h1V264h-1ZM321 248h1V264h-1ZM322 256h1V264h-1ZM323 255h1V264h-1ZM324 256h1V264h-1ZM325 254h1V264h-1ZM326 255h1V264h-1ZM327 254h1V264h-1ZM328 254h1V264h-1ZM329 255h1V264h-1ZM330 255h1V264h-1ZM331 256h1V264h-1ZM332 232h1V264h-1ZM333 253h1V264h-1ZM334 232h1V264h-1ZM335 256h1V264h-1ZM336 257h1V264h-1ZM337 257h1V264h-1ZM338 256h1V264h-1ZM339 256h1V264h-1ZM340 255h1V264h-1ZM341 250h1V264h-1ZM342 256h1V264h-1ZM343 237h1V264h-1ZM344 249h1V264h-1ZM345 255h1V264h-1ZM346 253h1V264h-1ZM347 253h1V264h-1ZM348 253h1V264h-1ZM349 243h1V264h-1ZM350 253h1V264h-1ZM351 245h1V264h-1ZM352 238h1V264h-1ZM353 255h1V264h-1ZM354 252h1V264h-1ZM355 249h1V264h-1ZM356 245h1V264h-1ZM357 253h1V264h-1ZM358 253h1V264h-1ZM359 256h1V264h-1ZM360 256h1V264h-1ZM361 253h1V264h-1ZM362 255h1V264h-1ZM363 253h1V264h-1ZM364 238h1V264h-1ZM365 253h1V264h-1ZM366 254h1V264h-1ZM367 253h1V264h-1ZM368 252h1V264h-1ZM369 252h1V264h-1ZM370 254h1V264h-1ZM371 164h1V264h-1ZM372 253h1V264h-1ZM373 247h1V264h-1ZM374 254h1V264h-1ZM375 255h1V264h-1ZM376 250h1V264h-1ZM377 248h1V264h-1ZM378 248h1V264h-1ZM379 253h1V264h-1ZM380 249h1V264h-1ZM381 200h1V264h-1ZM382 255h1V264h-1ZM383 255h1V264h-1ZM384 253h1V264h-1ZM385 252h1V264h-1ZM386 252h1V264h-1ZM387 252h1V264h-1ZM388 254h1V264h-1ZM389 254h1V264h-1ZM390 252h1V264h-1ZM391 251h1V264h-1ZM392 253h1V264h-1ZM393 248h1V264h-1ZM394 227h1V264h-1ZM395 252h1V264h-1ZM396 251h1V264h-1ZM397 235h1V264h-1ZM398 254h1V264h-1ZM399 253h1V264h-1ZM400 246h1V264h-1ZM401 251h1V264h-1ZM402 203h1V264h-1ZM403 246h1V264h-1ZM404 251h1V264h-1ZM405 252h1V264h-1ZM406 242h1V264h-1ZM407 244h1V264h-1ZM408 247h1V264h-1ZM409 247h1V264h-1ZM410 237h1V264h-1ZM411 239h1V264h-1ZM412 247h1V264h-1ZM413 230h1V264h-1ZM414 245h1V264h-1ZM415 244h1V264h-1ZM416 244h1V264h-1ZM417 246h1V264h-1ZM418 245h1V264h-1ZM419 242h1V264h-1ZM420 242h1V264h-1ZM421 227h1V264h-1ZM422 221h1V264h-1ZM423 218h1V264h-1ZM424 242h1V264h-1ZM425 242h1V264h-1ZM426 235h1V264h-1ZM427 239h1V264h-1ZM428 241h1V264h-1ZM429 239h1V264h-1ZM430 241h1V264h-1ZM431 241h1V264h-1ZM432 237h1V264h-1ZM433 239h1V264h-1ZM434 241h1V264h-1ZM435 240h1V264h-1ZM436 240h1V264h-1ZM437 240h1V264h-1ZM438 239h1V264h-1ZM439 222h1V264h-1ZM440 235h1V264h-1ZM441 238h1V264h-1ZM442 235h1V264h-1ZM443 232h1V264h-1ZM444 238h1V264h-1ZM445 232h1V264h-1ZM446 237h1V264h-1ZM447 232h1V264h-1ZM448 241h1V264h-1ZM449 235h1V264h-1ZM450 241h1V264h-1ZM451 240h1V264h-1ZM452 229h1V264h-1ZM453 234h1V264h-1Z" fill="#00FFFF"/>
<path d="M48 246h1v1h-1ZM49 246h1v1h-1ZM50 246h1v1h-1ZM51 246h1v1h-1ZM52 245h1v1h-1ZM53 245h1v1h-1ZM54 245h1v1h-1ZM55 245h1v1h-1ZM56 245h1v1h-1ZM57 245h1v1h-1ZM58 245h1v1h-1ZM59 244h1v1h-1ZM60 244h1v1h-1ZM61 244h1v1h-1ZM62 244h1v1h-1ZM63 244h1v1h-1ZM64 244h1v1h-1ZM65 244h1v1h-1ZM66 244h1v1h-1ZM67 244h1v1h-1ZM68 243h1v1h-1ZM69 243h1v1h-1ZM70 243h1v1h-1ZM71 243h1v1h-1ZM72 243h1v1h-1ZM73 243h1v1h-1ZM74 243h1v1h-1ZM75 243h1v1h-1ZM76 243h1v1h-1ZM77 242h1v1h-1ZM78 242h1v1h-1ZM79 242h1v1h-1ZM80 242h1v1h-1ZM81 242h1v1h-1ZM82 242h1v1h-1ZM83 242h1v1h-1ZM84 242h1v1h-1ZM85 242h1v1h-1ZM86 242h1v1h-1ZM87 241h1v1h-1ZM88 241h1v1h-1ZM89 241h1v1h-1ZM90 241h1v1h-1ZM91 241h1v1h-1ZM92 241h1v1h-1ZM93 241h1v1h-1ZM94 241h1v1h-1ZM95 240h1v1h-1ZM96 240h1v1h-1ZM97 240h1v1h-1ZM98 240h1v1h-1ZM99 240h1v1h-1ZM100 240h1v1h-1ZM101 240h1v1h-1ZM102 240h1v1h-1ZM103 240h1v1h-1ZM104 240h1v1h-1ZM105 239h1v1h-1ZM106 239h1v1h-1ZM107 239h1v1h-1ZM108 239h1v1h-1ZM109 239h1v1h-1ZM110 239h1v1h-1ZM111 239h1v1h-1ZM112 239h1v1h-1ZM113 239h1v1h-1ZM114 239h1v1h-1ZM115 239h1v1h-1ZM116 239h1v1h-1ZM117 239h1v1h-1ZM118 239h1v1h-1ZM119 239h1v1h-1ZM120 238h1v1h-1ZM121 238h1v1h-1ZM122 238h1v1h-1ZM123 238h1v1h-1ZM124 238h1v1h-1ZM125 238h1v1h-1ZM126 238h1v1h-1ZM127 238h1v1h-1ZM128 238h1v1h-1ZM129 238h1v1h-1ZM130 238h1v1h-1ZM131 238h1v1h-1ZM132 238h1v1h-1ZM133 238h1v1h-1ZM134 238h1v1h-1ZM135 237h1v1h-1ZM136 237h1v1h-1ZM137 237h1v1h-1ZM138 237h1v1h-1ZM139 237h1v1h-1ZM140 237h1v1h-1ZM141 237h1v1h-1ZM142 237h1v1h-1ZM143 237h1v1h-1ZM144 237h1v1h-1ZM145 237h1v1h-1ZM146 237h1v1h-1ZM147 237h1v1h-1ZM148 237h1v1h-1ZM149 237h1v1h-1ZM150 237h1v1h-1ZM151 237h1v1h-1ZM152 236h1v1h-1ZM153 236h1v1h-1ZM154 236h1v1h-1ZM155 236h1v1h-1ZM156 236h1v1h-1ZM157 236h1v1h-1ZM158 236h1v1h-1ZM159 236h1v1h-1ZM160 236h1v1h-1ZM161 236h1v1h-1ZM162 236h1v1h-1ZM163 235h1v1h-1ZM164 235h1v1h-1ZM165 235h1v1h-1ZM166 235h1v1h-1ZM167 235h1v1h-1ZM168 235h1v1h-1ZM169 235h1v1h-1ZM170 235h1v1h-1ZM171 235h1v1h-1ZM172 235h1v1h-1ZM173 235h1v1h-1ZM174 235h1v1h-1ZM175 234h1v1h-1ZM176 234h1v1h-1ZM177 234h1v1h-1ZM178 234h1v1h-1ZM179 234h1v1h-1ZM180 234h1v1h-1ZM181 234h1v1h-1ZM182 234h1v1h-1ZM183 234h1v1h-1ZM184 234h1v1h-1ZM185 234h1v1h-1ZM186 234h1v1h-1ZM187 234h1v1h-1ZM188 234h1v1h-1ZM189 234h1v1h-1ZM190 234h1v1h-1ZM191 234h1v1h-1ZM192 234h1v1h-1ZM193 234h1v1h-1ZM194 234h1v1h-1ZM195 234h1v1h-1ZM196 234h1v1h-1ZM197 234h1v1h-1ZM198 233h1v1h-1ZM199 233h1v1h-1ZM200 233h1v1h-1ZM201 233h1v1h-1ZM202 233h1v1h-1ZM203 233h1v1h-1ZM204 233h1v1h-1ZM205 233h1v1h-1ZM206 233h1v1h-1ZM207 233h1v1h-1ZM208 233h1v1h-1ZM209 233h1v1h-1ZM210 233h1v1h-1ZM211 233h1v1h-1ZM212 233h1v1h-1ZM213 232h1v1h-1ZM214 232h1v1h-1ZM215 232h1v1h-1ZM216 232h1v1h-1ZM217 232h1v1h-1ZM218 232h1v1h-1ZM219 232h1v1h-1ZM220 232h1v1h-1ZM221 232h1v1h-1ZM222 232h1v1h-1ZM223 232h1v1h-1ZM224 232h1v1h-1ZM225 232h1v1h-1ZM226 232h1v1h-1ZM227 232h1v1h-1ZM228 232h1v1h-1ZM229 232h1v1h-1ZM230 231h1v1h-1ZM231 231h1v1h-1ZM232 231h1v1h-1ZM233 231h1v1h-1ZM234 231h1v1h-1ZM235 231h1v1h-1ZM236 231h1v1h-1ZM237 231h1v1h-1ZM238 231h1v1h-1ZM239 231h1v1h-1ZM240 231h1v1h-1ZM241 231h1v1h-1ZM242 231h1v1h-1ZM243 231h1v1h-1ZM244 231h1v1h-1ZM245 231h1v1h-1ZM246 231h1v1h-1ZM247 230h1v1h-1ZM248 230h1v1h-1ZM249 230h1v1h-1ZM250 230h1v1h-1ZM251 230h1v1h-1ZM252 230h1v1h-1ZM253 230h1v1h-1ZM254 230h1v1h-1ZM255 230h1v1h-1ZM256 230h1v1h-1ZM257 230h1v1h-1ZM258 230h1v1h-1ZM259 230h1v1h-1ZM260 230h1v1h-1ZM261 230h1v1h-1ZM262 229h1v1h-1ZM263 229h1v1h-1ZM264 229h1v1h-1ZM265 229h1v1h-1ZM266 229h1v1h-1ZM267 229h1v1h-1ZM268 229h1v1h-1ZM269 229h1v1h-1ZM270 229h1v1h-1ZM271 229h1v1h-1ZM272 229h1v1h-1ZM273 229h1v1h-1ZM274 229h1v1h-1ZM275 229h1v1h-1ZM276 229h1v1h-1ZM277 229h1v1h-1ZM278 229h1v1h-1ZM279 229h1v1h-1ZM280 228h1v1h-1ZM281 228h1v1h-1ZM282 228h1v1h-1ZM283 228h1v1h-1ZM284 228h1v1h-1ZM285 228h1v1h-1ZM286 228h1v1h-1ZM287 228h1v1h-1ZM288 228h1v1h-1ZM289 228h1v1h-1ZM290 228h1v1h-1ZM291 228h1v1h-1ZM292 228h1v1h-1ZM293 228h1v1h-1ZM294 228h1v1h-1ZM295 228h1v1h-1ZM296 228h1v1h-1ZM297 228h1v1h-1ZM298 228h1v1h-1ZM299 228h1v1h-1ZM300 228h1v1h-1ZM301 227h1v1h-1ZM302 227h1v1h-1ZM303 227h1v1h-1ZM304 227h1v1h-1ZM305 227h1v1h-1ZM306 227h1v1h-1ZM307 227h1v1h-1ZM308 227h1v1h-1ZM309 227h1v1h-1ZM310 227h1v1h-1ZM311 227h1v1h-1ZM312 227h1v1h-1ZM313 227h1v1h-1ZM314 227h1v1h-1ZM315 227h1v1h-1ZM316 227h1v1h-1ZM317 227h1v1h-1ZM318 226h1v1h-1ZM319 226h1v1h-1ZM320 226h1v1h-1ZM321 226h1v1h-1ZM322 226h1v1h-1ZM323 226h1v1h-1ZM324 226h1v1h-1ZM325 226h1v1h-1ZM326 226h1v1h-1ZM327 226h1v1h-1ZM328 226h1v1h-1ZM329 226h1v1h-1ZM330 226h1v1h-1ZM331 226h1v1h-1ZM332 226h1v1h-1ZM333 226h1v1h-1ZM334 226h1v1h-1ZM335 225h1v1h-1ZM336 225h1v1h-1ZM337 225h1v1h-1ZM338 225h1v1h-1ZM339 225h1v1h-1ZM340 225h1v1h-1ZM341 225h1v1h-1ZM342 225h1v1h-1ZM343 225h1v1h-1ZM344 225h1v1h-1ZM345 225h1v1h-1ZM346 225h1v1h-1ZM347 225h1v1h-1ZM348 225h1v1h-1ZM349 225h1v1h-1ZM350 225h1v1h-1ZM351 225h1v1h-1ZM352 225h1v1h-1ZM353 225h1v1h-1ZM354 225h1v1h-1ZM355 225h1v1h-1ZM356 225h1v1h-1ZM357 225h1v1h-1ZM358 225h1v1h-1ZM359 225h1v1h-1ZM360 225h1v1h-1ZM361 225h1v1h-1ZM362 225h1v1h-1ZM363 225h1v1h-1ZM364 225h1v1h-1ZM365 225h1v1h-1ZM366 225h1v1h-1ZM367 224h1v1h-1ZM368 224h1v1h-1ZM369 224h1v1h-1ZM370 224h1v1h-1ZM371 224h1v1h-1ZM372 224h1v1h-1ZM373 224h1v1h-1ZM374 224h1v1h-1ZM375 224h1v1h-1ZM376 224h1v1h-1ZM377 224h1v1h-1ZM378 224h1v1h-1ZM379 224h1v1h-1ZM380 224h1v1h-1ZM381 224h1v1h-1ZM382 224h1v1h-1ZM383 224h1v1h-1ZM384 224h1v1h-1ZM385 224h1v1h-1ZM386 223h1v1h-1ZM387 223h1v1h-1ZM388 223h1v1h-1ZM389 223h1v1h-1ZM390 223h1v1h-1ZM391 223h1v1h-1ZM392 223h1v1h-1ZM393 223h1v1h-1ZM394 223h1v1h-1ZM395 223h1v1h-1ZM396 223h1v1h-1ZM397 223h1v1h-1ZM398 223h1v1h-1ZM399 223h1v1h-1ZM400 223h1v1h-1ZM401 223h1v1h-1ZM402 223h1v1h-1ZM403 223h1v1h-1ZM404 223h1v1h-1ZM405 222h1v1h-1ZM406 222h1v1h-1ZM407 222h1v1h-1ZM408 222h1v1h-1ZM409 222h1v1h-1ZM410 222h1v1h-1ZM411 222h1v1h-1ZM412 222h1v1h-1ZM413 222h1v1h-1ZM414 222h1v1h-1ZM415 222h1v1h-1ZM416 222h1v1h-1ZM417 222h1v1h-1ZM418 222h1v1h-1ZM419 222h1v1h-1ZM420 222h1v1h-1ZM421 222h1v1h-1ZM422 222h1v1h-1ZM423 222h1v1h-1ZM424 222h1v1h-1ZM425 222h1v1h-1ZM426 222h1v1h-1ZM427 222h1v1h-1ZM428 222h1v1h-1ZM429 222h1v1h-1ZM430 222h1v1h-1ZM431 222h1v1h-1ZM432 222h1v1h-1ZM433 222h1v1h-1ZM434 222h1v1h-1ZM435 222h1v1h-1ZM436 222h1v1h-1ZM437 222h1v1h-1ZM438 222h1v1h-1ZM439 222h1v1h-1ZM440 222h1v1h-1ZM441 222h1v1h-1ZM442 222h1v1h-1ZM443 222h1v1h-1ZM444 222h1v1h-1ZM445 222h1v1h-1ZM446 222h1v1h-1ZM447 222h1v1h-1ZM448 222h1v1h-1ZM449 222h1v1h-1ZM450 222h1v1h-1ZM451 222h1v1h-1ZM452 222h1v1h-1Z" fill="#00DC00"/>
<rect x="454" y="130" width="1" height="134" fill="#E0E0E0"/>
<rect x="454" y="292" width="1" height="133" fill="#E0E0E0"/>
<rect x="466" y="263" width="4" height="1" fill="#0000FF"/>
<rect x="466" y="255" width="2" height="1" fill="#0000CC"/>
<rect x="466" y="247" width="4" height="1" fill="#0000FF"/>
<rect x="466" y="239" width="2" height="1" fill="#0000CC"/>
<rect x="466" y="230" width="4" height="1" fill="#0000FF"/>
<rect x="466" y="222" width="2" height="1" fill="#0000CC"/>
<rect x="466" y="214" width="4" height="1" fill="#0000FF"/>
<rect x="466" y="205" width="2" height="1" fill="#0000CC"/>
<rect x="466" y="197" width="4" height="1" fill="#0000FF"/>
<rect x="466" y="189" width="2" height="1" fill="#0000CC"/>
<rect x="466" y="180" width="4" height="1" fill="#0000FF"/>
<rect x="466" y="172" width="2" height="1" fill="#0000CC"/>
<rect x="466" y="164" width="4" height="1" fill="#0000FF"/>
<rect x="466" y="155" width="2" height="1" fill="#0000CC"/>
<rect x="466" y="147" width="4" height="1" fill="#0000FF"/>
<rect x="466" y="139" width="2" height="1" fill="#0000CC"/>
<rect x="466" y="130" width="4" height="1" fill="#0000FF"/>
<rect x="54" y="399" width="1" height="27" fill="#A8EC00"/>
<rect x="59" y="412" width="1" height="14" fill="#80E800"/>
<rect x="61" y="412" width="1" height="14" fill="#80E800"/>
<rect x="63" y="399" width="1" height="27" fill="#A8EC00"/>
<rect x="70" y="386" width="1" height="40" fill="#C8F000"/>
<rect x="71" y="412" width="1" height="14" fill="#80E800"/>
<rect x="75" y="412" width="1" height="14" fill="#80E800"/>
<rect x="81" y="412" width="1" height="14" fill="#80E800"/>
<rect x="82" y="412" width="1" height="14" fill="#80E800"/>
<rect x="84" y="399" width="1" height="27" fill="#A8EC00"/>
<rect x="87" y="412" width="1" height="14" fill="#80E800"/>
<rect x="88" y="412" width="1" height="14" fill="#80E800"/>
<rect x="126" y="412" width="1" height="14" fill="#80E800"/>
<rect x="133" y="412" width="1" height="14" fill="#80E800"/>
<rect x="171" y="412" width="1" height="14" fill="#80E800"/>
<rect x="172" y="412" width="1" height="14" fill="#80E800"/>
<rect x="180" y="412" width="1" height="14" fill="#80E800"/>
<rect x="181" y="412" width="1" height="14" fill="#80E800"/>
<rect x="189" y="412" width="1" height="14" fill="#80E800"/>
<rect x="200" y="412" width="1" height="14" fill="#80E800"/>
<rect x="201" y="412" width="1" height="14" fill="#80E800"/>
<rect x="210" y="399" width="1" height="27" fill="#A8EC00"/>
<rect x="235" y="399" width="1" height="27" fill="#A8EC00"/>
<rect x="248" y="412" width="1" height="14" fill="#80E800"/>
<rect x="251" y="412" width="1" height="14" fill="#80E800"/>
<rect x="259" y="412" width="1" height="14" fill="#80E800"/>
<rect x="260" y="412" width="1" height="14" fill="#80E800"/>
<rect x="271" y="399" width="1" height="27" fill="#A8EC00"/>
<rect x="277" y="412" width="1" height="14" fill="#80E800"/>
<rect x="285" y="412" width="1" height="14" fill="#80E800"/>
<rect x="286" y="412" width="1" height="14" fill="#80E800"/>
<rect x="300" y="412" width="1" height="14" fill="#80E800"/>
<rect x="306" y="412" width="1" height="14" fill="#80E800"/>
<rect x="313" y="399" width="1" height="27" fill="#A8EC00"/>
<rect x="315" y="399" width="1" height="27" fill="#A8EC00"/>
<rect x="321" y="412" width="1" height="14" fill="#80E800"/>
<rect x="372" y="412" width="1" height="14" fill="#80E800"/>
<rect x="393" y="412" width="1" height="14" fill="#80E800"/>
<rect x="417" y="412" width="1" height="14" fill="#80E800"/>
<rect x="419" y="412" width="1" height="14" fill="#80E800"/>
<rect x="434" y="412" width="1" height="14" fill="#80E800"/>
</svg>
<div class="t" style="right:600px;top:123px;font:12px/13px 'Liberation Sans',sans-serif;letter-spacing:-0.7px">200</div>
<div class="t" style="right:600px;top:150px;font:12px/13px 'Liberation Sans',sans-serif;letter-spacing:-0.7px">160</div>
<div class="t" style="right:600px;top:177px;font:12px/13px 'Liberation Sans',sans-serif;letter-spacing:-0.7px">120</div>
<div class="t" style="right:600px;top:203px;font:12px/13px 'Liberation Sans',sans-serif;letter-spacing:-0.7px">80</div>
<div class="t" style="right:600px;top:230px;font:12px/13px 'Liberation Sans',sans-serif;letter-spacing:-0.7px">40</div>
<div class="t" style="right:600px;top:285px;font:12px/13px 'Liberation Sans',sans-serif;letter-spacing:-0.7px">10</div>
<div class="t" style="right:600px;top:312px;font:12px/13px 'Liberation Sans',sans-serif;letter-spacing:-0.7px">8</div>
<div class="t" style="right:600px;top:339px;font:12px/13px 'Liberation Sans',sans-serif;letter-spacing:-0.7px">6</div>
<div class="t" style="right:600px;top:365px;font:12px/13px 'Liberation Sans',sans-serif;letter-spacing:-0.7px">4</div>
<div class="t" style="right:600px;top:392px;font:12px/13px 'Liberation Sans',sans-serif;letter-spacing:-0.7px">2</div>
<div class="t" style="left:471px;top:123px;font:12px/13px 'Liberation Sans',sans-serif;letter-spacing:-0.7px">16</div>
<div class="t" style="left:471px;top:140px;font:12px/13px 'Liberation Sans',sans-serif;letter-spacing:-0.7px">14</div>
<div class="t" style="left:471px;top:157px;font:12px/13px 'Liberation Sans',sans-serif;letter-spacing:-0.7px">12</div>
<div class="t" style="left:471px;top:173px;font:12px/13px 'Liberation Sans',sans-serif;letter-spacing:-0.7px">10</div>
<div class="t" style="left:471px;top:190px;font:12px/13px 'Liberation Sans',sans-serif;letter-spacing:-0.7px">8</div>
<div class="t" style="left:471px;top:207px;font:12px/13px 'Liberation Sans',sans-serif;letter-spacing:-0.7px">6</div>
<div class="t" style="left:471px;top:223px;font:12px/13px 'Liberation Sans',sans-serif;letter-spacing:-0.7px">4</div>
<div class="t" style="left:471px;top:240px;font:12px/13px 'Liberation Sans',sans-serif;letter-spacing:-0.7px">2</div>
<div class="t" style="left:20px;width:60px;text-align:center;top:267px;font:12px/13px 'Liberation Sans',sans-serif;letter-spacing:-0.7px">0.0</div>
<div class="t" style="left:20px;width:60px;text-align:center;top:429px;font:12px/13px 'Liberation Sans',sans-serif;letter-spacing:-0.7px">0.0</div>
<div class="t" style="left:66px;width:60px;text-align:center;top:267px;font:12px/13px 'Liberation Sans',sans-serif;letter-spacing:-0.7px">0.5</div>
<div class="t" style="left:66px;width:60px;text-align:center;top:429px;font:12px/13px 'Liberation Sans',sans-serif;letter-spacing:-0.7px">0.5</div>
<div class="t" style="left:112px;width:60px;text-align:center;top:267px;font:12px/13px 'Liberation Sans',sans-serif;letter-spacing:-0.7px">1.0</div>
<div class="t" style="left:112px;width:60px;text-align:center;top:429px;font:12px/13px 'Liberation Sans',sans-serif;letter-spacing:-0.7px">1.0</div>
<div class="t" style="left:159px;width:60px;text-align:center;top:267px;font:12px/13px 'Liberation Sans',sans-serif;letter-spacing:-0.7px">1.5</div>
<div class="t" style="left:159px;width:60px;text-align:center;top:429px;font:12px/13px 'Liberation Sans',sans-serif;letter-spacing:-0.7px">1.5</div>
<div class="t" style="left:205px;width:60px;text-align:center;top:267px;font:12px/13px 'Liberation Sans',sans-serif;letter-spacing:-0.7px">2.0</div>
<div class="t" style="left:205px;width:60px;text-align:center;top:429px;font:12px/13px 'Liberation Sans',sans-serif;letter-spacing:-0.7px">2.0</div>
<div class="t" style="left:252px;width:60px;text-align:center;top:267px;font:12px/13px 'Liberation Sans',sans-serif;letter-spacing:-0.7px">2.5</div>
<div class="t" style="left:252px;width:60px;text-align:center;top:429px;font:12px/13px 'Liberation Sans',sans-serif;letter-spacing:-0.7px">2.5</div>
<div class="t" style="left:298px;width:60px;text-align:center;top:267px;font:12px/13px 'Liberation Sans',sans-serif;letter-spacing:-0.7px">3.0</div>
<div class="t" style="left:298px;width:60px;text-align:center;top:429px;font:12px/13px 'Liberation Sans',sans-serif;letter-spacing:-0.7px">3.0</div>
<div class="t" style="left:345px;width:60px;text-align:center;top:267px;font:12px/13px 'Liberation Sans',sans-serif;letter-spacing:-0.7px">3.5</div>
<div class="t" style="left:345px;width:60px;text-align:center;top:429px;font:12px/13px 'Liberation Sans',sans-serif;letter-spacing:-0.7px">3.5</div>
<div class="t" style="left:391px;width:60px;text-align:center;top:267px;font:12px/13px 'Liberation Sans',sans-serif;letter-spacing:-0.7px">4.0</div>
<div class="t" style="left:391px;width:60px;text-align:center;top:429px;font:12px/13px 'Liberation Sans',sans-serif;letter-spacing:-0.7px">4.0</div>
<div class="t" style="left:438px;width:60px;text-align:center;top:267px;font:12px/13px 'Liberation Sans',sans-serif;letter-spacing:-0.7px">4.5</div>
<div class="t" style="left:438px;width:60px;text-align:center;top:429px;font:12px/13px 'Liberation Sans',sans-serif;letter-spacing:-0.7px">4.5</div>
<div style="left:491px;top:123px;width:138px;height:1px;background:#857652;"></div>
<div style="left:491px;top:123px;width:1px;height:83px;background:#857652;"></div>
<div style="left:491px;top:206px;width:139px;height:1px;background:#857652;"></div>
<div style="left:629px;top:123px;width:1px;height:84px;background:#857652;"></div>
<div style="left:492px;top:124px;width:137px;height:1px;background:#FFE7A4;"></div>
<div style="left:492px;top:124px;width:1px;height:82px;background:#FFE7A4;"></div>
<div style="left:491px;top:207px;width:140px;height:1px;background:#FFE7A4;"></div>
<div style="left:630px;top:123px;width:1px;height:85px;background:#FFE7A4;"></div>
<div style="left:498px;top:121px;width:44px;height:6px;background:#C5B386;"></div>
<div class="t" style="left:500px;top:118px;color:#000;font:12px/13px 'Liberation Sans',sans-serif;letter-spacing:-0.7px;">Disc info</div>
<div class="t" style="left:500px;top:133px;color:#000;font:12px/13px 'Liberation Sans',sans-serif;letter-spacing:-0.7px;">Type:</div>
<div class="t" style="left:545px;top:133px;color:#000080;font:12px/13px 'Liberation Sans',sans-serif;letter-spacing:-0.7px;">DVD+R</div>
<div class="t" style="left:499px;top:150px;color:#000;font:12px/13px 'Liberation Sans',sans-serif;letter-spacing:-0.7px;">ID:</div>
<div class="t" style="left:545px;top:150px;color:#000080;font:12px/13px 'Liberation Sans',sans-serif;letter-spacing:-0.7px;">MCC 004</div>
<div class="t" style="left:499px;top:168px;color:#000;font:12px/13px 'Liberation Sans',sans-serif;letter-spacing:-0.7px;">Date:</div>
<div class="t" style="left:545px;top:168px;color:#000080;font:12px/13px 'Liberation Sans',sans-serif;letter-spacing:-0.7px;">15 May 2006</div>
<div class="t" style="left:499px;top:186px;color:#000;font:12px/13px 'Liberation Sans',sans-serif;letter-spacing:-0.7px;">Label:</div>
<div class="t" style="left:545px;top:186px;color:#000080;font:12px/13px 'Liberation Sans',sans-serif;letter-spacing:-0.7px;">EIA_</div>
<div style="left:491px;top:214px;width:138px;height:1px;background:#857652;"></div>
<div style="left:491px;top:214px;width:1px;height:202px;background:#857652;"></div>
<div style="left:491px;top:416px;width:139px;height:1px;background:#857652;"></div>
<div style="left:629px;top:214px;width:1px;height:203px;background:#857652;"></div>
<div style="left:492px;top:215px;width:137px;height:1px;background:#FFE7A4;"></div>
<div style="left:492px;top:215px;width:1px;height:201px;background:#FFE7A4;"></div>
<div style="left:491px;top:417px;width:140px;height:1px;background:#FFE7A4;"></div>
<div style="left:630px;top:214px;width:1px;height:204px;background:#FFE7A4;"></div>
<div style="left:498px;top:212px;width:41px;height:6px;background:#C5B386;"></div>
<div class="t" style="left:500px;top:209px;color:#000;font:12px/13px 'Liberation Sans',sans-serif;letter-spacing:-0.7px;">Settings</div>
<div class="t" style="left:499px;top:224px;color:#000;font:12px/13px 'Liberation Sans',sans-serif;letter-spacing:-0.7px;">Speed:</div>
<div style="left:500px;top:239px;width:85px;height:21px;background:#FFFFFF;"></div>
<div style="left:500px;top:239px;width:84px;height:1px;background:#857652;"></div>
<div style="left:500px;top:239px;width:1px;height:20px;background:#857652;"></div>
<div style="left:500px;top:259px;width:85px;height:1px;background:#FFE7A4;"></div>
<div style="left:584px;top:239px;width:1px;height:21px;background:#FFE7A4;"></div>
<div style="left:501px;top:240px;width:82px;height:1px;background:#000000;"></div>
<div style="left:501px;top:240px;width:1px;height:18px;background:#000000;"></div>
<div style="left:501px;top:258px;width:83px;height:1px;background:#F4DA96;"></div>
<div style="left:583px;top:240px;width:1px;height:19px;background:#F4DA96;"></div>
<div class="t" style="left:504px;top:244px;color:#000;font:12px/13px 'Liberation Sans',sans-serif;letter-spacing:1.2px;">5X</div>
<div style="left:566px;top:241px;width:16px;height:17px;background:#C5B386;"></div>
<div style="left:566px;top:241px;width:15px;height:1px;background:#F4DA96;"></div>
<div style="left:566px;top:241px;width:1px;height:16px;background:#F4DA96;"></div>
<div style="left:566px;top:257px;width:16px;height:1px;background:#000000;"></div>
<div style="left:581px;top:241px;width:1px;height:17px;background:#000000;"></div>
<div style="left:567px;top:242px;width:13px;height:1px;background:#FFE7A4;"></div>
<div style="left:567px;top:242px;width:1px;height:14px;background:#FFE7A4;"></div>
<div style="left:567px;top:256px;width:14px;height:1px;background:#857652;"></div>
<div style="left:580px;top:242px;width:1px;height:15px;background:#857652;"></div>
<svg style="left:570px;top:248px" width="7" height="4" shape-rendering="crispEdges"><path d="M0 0h7v1h-1v1h-1v1h-1v1h-1v-1h-1v-1h-1v-1h-1z" fill="#000"/></svg>
<div style="left:592px;top:237px;width:23px;height:23px;background:#C5B386;"></div>
<div style="left:592px;top:237px;width:22px;height:1px;background:#FFE7A4;"></div>
<div style="left:592px;top:237px;width:1px;height:22px;background:#FFE7A4;"></div>
<div style="left:592px;top:259px;width:23px;height:1px;background:#000000;"></div>
<div style="left:614px;top:237px;width:1px;height:23px;background:#000000;"></div>
<div style="left:593px;top:238px;width:20px;height:1px;background:#F4DA96;"></div>
<div style="left:593px;top:238px;width:1px;height:20px;background:#F4DA96;"></div>
<div style="left:593px;top:258px;width:21px;height:1px;background:#857652;"></div>
<div style="left:613px;top:238px;width:1px;height:21px;background:#857652;"></div>
<div style="left:596px;top:240px;width:14px;height:16px;background:#000000;"></div>
<div style="left:597px;top:241px;width:12px;height:14px;background:#FFFFFF;"></div>
<svg style="left:597px;top:241px" width="12" height="14" viewBox="0 0 12 14">
<path d="M3 6.5 V4.5 Q3 3.5 4 3.5 H7" fill="none" stroke="#008000" stroke-width="1.3"/>
<path d="M6.5 1 L9.5 3.5 L6.5 6 Z" fill="#008000"/>
<path d="M9 7.5 V9.5 Q9 10.5 8 10.5 H5" fill="none" stroke="#008000" stroke-width="1.3"/>
<path d="M5.5 8 L2.5 10.5 L5.5 13 Z" fill="#008000"/>
</svg>
<div class="t" style="left:502px;top:271px;color:#000;font:12px/13px 'Liberation Sans',sans-serif;letter-spacing:-0.7px;">Start:</div>
<div style="left:554px;top:265px;width:60px;height:20px;background:#FFFFFF;"></div>
<div style="left:554px;top:265px;width:59px;height:1px;background:#857652;"></div>
<div style="left:554px;top:265px;width:1px;height:19px;background:#857652;"></div>
<div style="left:554px;top:284px;width:60px;height:1px;background:#FFE7A4;"></div>
<div style="left:613px;top:265px;width:1px;height:20px;background:#FFE7A4;"></div>
<div style="left:555px;top:266px;width:57px;height:1px;background:#000000;"></div>
<div style="left:555px;top:266px;width:1px;height:17px;background:#000000;"></div>
<div style="left:555px;top:283px;width:58px;height:1px;background:#F4DA96;"></div>
<div style="left:612px;top:266px;width:1px;height:18px;background:#F4DA96;"></div>
<div class="t" style="left:557px;top:269px;color:#000;font:12px/13px 'Liberation Sans',sans-serif;letter-spacing:-0.7px;">0000 MB</div>
<div class="t" style="left:502px;top:293px;color:#000;font:12px/13px 'Liberation Sans',sans-serif;letter-spacing:-0.7px;">End:</div>
<div style="left:554px;top:288px;width:60px;height:20px;background:#FFFFFF;"></div>
<div style="left:554px;top:288px;width:59px;height:1px;background:#857652;"></div>
<div style="left:554px;top:288px;width:1px;height:19px;background:#857652;"></div>
<div style="left:554px;top:307px;width:60px;height:1px;background:#FFE7A4;"></div>
<div style="left:613px;top:288px;width:1px;height:20px;background:#FFE7A4;"></div>
<div style="left:555px;top:289px;width:57px;height:1px;background:#000000;"></div>
<div style="left:555px;top:289px;width:1px;height:17px;background:#000000;"></div>
<div style="left:555px;top:306px;width:58px;height:1px;background:#F4DA96;"></div>
<div style="left:612px;top:289px;width:1px;height:18px;background:#F4DA96;"></div>
<div class="t" style="left:557px;top:292px;color:#000;font:12px/13px 'Liberation Sans',sans-serif;letter-spacing:-0.7px;">4476 MB</div>
<div style="left:502px;top:313px;width:13px;height:13px;background:#FFFFFF;"></div>
<div style="left:502px;top:313px;width:12px;height:1px;background:#857652;"></div>
<div style="left:502px;top:313px;width:1px;height:12px;background:#857652;"></div>
<div style="left:502px;top:325px;width:13px;height:1px;background:#FFE7A4;"></div>
<div style="left:514px;top:313px;width:1px;height:13px;background:#FFE7A4;"></div>
<div style="left:503px;top:314px;width:10px;height:1px;background:#000000;"></div>
<div style="left:503px;top:314px;width:1px;height:10px;background:#000000;"></div>
<div style="left:503px;top:324px;width:11px;height:1px;background:#F4DA96;"></div>
<div style="left:513px;top:314px;width:1px;height:11px;background:#F4DA96;"></div>
<div class="t" style="left:520px;top:314px;color:#000;font:12px/13px 'Liberation Sans',sans-serif;letter-spacing:-0.7px;">Quick scan</div>
<div style="left:502px;top:334px;width:13px;height:13px;background:#FFFFFF;"></div>
<div style="left:502px;top:334px;width:12px;height:1px;background:#857652;"></div>
<div style="left:502px;top:334px;width:1px;height:12px;background:#857652;"></div>
<div style="left:502px;top:346px;width:13px;height:1px;background:#FFE7A4;"></div>
<div style="left:514px;top:334px;width:1px;height:13px;background:#FFE7A4;"></div>
<div style="left:503px;top:335px;width:10px;height:1px;background:#000000;"></div>
<div style="left:503px;top:335px;width:1px;height:10px;background:#000000;"></div>
<div style="left:503px;top:345px;width:11px;height:1px;background:#F4DA96;"></div>
<div style="left:513px;top:335px;width:1px;height:11px;background:#F4DA96;"></div>
<svg style="left:505px;top:337px" width="7" height="7" shape-rendering="crispEdges"><path d="M6 0h1v3h-1v1h-1v1h-1v1h-1v1h-1v-1h-1v-1h-1v-3h1v1h1v1h1v-1h1v-1h1v-1h1z" fill="#000"/></svg>
<div class="t" style="left:520px;top:335px;color:#000;font:12px/13px 'Liberation Sans',sans-serif;letter-spacing:-0.7px;">Show C1/PIE</div>
<div style="left:502px;top:350px;width:13px;height:13px;background:#FFFFFF;"></div>
<div style="left:502px;top:350px;width:12px;height:1px;background:#857652;"></div>
<div style="left:502px;top:350px;width:1px;height:12px;background:#857652;"></div>
<div style="left:502px;top:362px;width:13px;height:1px;background:#FFE7A4;"></div>
<div style="left:514px;top:350px;width:1px;height:13px;background:#FFE7A4;"></div>
<div style="left:503px;top:351px;width:10px;height:1px;background:#000000;"></div>
<div style="left:503px;top:351px;width:1px;height:10px;background:#000000;"></div>
<div style="left:503px;top:361px;width:11px;height:1px;background:#F4DA96;"></div>
<div style="left:513px;top:351px;width:1px;height:11px;background:#F4DA96;"></div>
<svg style="left:505px;top:353px" width="7" height="7" shape-rendering="crispEdges"><path d="M6 0h1v3h-1v1h-1v1h-1v1h-1v1h-1v-1h-1v-1h-1v-3h1v1h1v1h1v-1h1v-1h1v-1h1z" fill="#000"/></svg>
<div class="t" style="left:520px;top:351px;color:#000;font:12px/13px 'Liberation Sans',sans-serif;letter-spacing:-0.7px;">Show C2/PIF</div>
<div style="left:502px;top:367px;width:13px;height:13px;background:#C5B386;"></div>
<div style="left:502px;top:367px;width:12px;height:1px;background:#857652;"></div>
<div style="left:502px;top:367px;width:1px;height:12px;background:#857652;"></div>
<div style="left:502px;top:379px;width:13px;height:1px;background:#FFE7A4;"></div>
<div style="left:514px;top:367px;width:1px;height:13px;background:#FFE7A4;"></div>
<div style="left:503px;top:368px;width:10px;height:1px;background:#000000;"></div>
<div style="left:503px;top:368px;width:1px;height:10px;background:#000000;"></div>
<div style="left:503px;top:378px;width:11px;height:1px;background:#F4DA96;"></div>
<div style="left:513px;top:368px;width:1px;height:11px;background:#F4DA96;"></div>
<svg style="left:505px;top:370px" width="7" height="7" shape-rendering="crispEdges"><path d="M6 0h1v3h-1v1h-1v1h-1v1h-1v1h-1v-1h-1v-1h-1v-3h1v1h1v1h1v-1h1v-1h1v-1h1z" fill="#857652"/></svg>
<div class="t" style="left:521px;top:369px;color:#FFE7A4;font:12px/13px 'Liberation Sans',sans-serif;letter-spacing:-0.7px;">Show jitter</div>
<div class="t" style="left:520px;top:368px;color:#857652;font:12px/13px 'Liberation Sans',sans-serif;letter-spacing:-0.7px;">Show jitter</div>
<div style="left:502px;top:383px;width:13px;height:13px;background:#FFFFFF;"></div>
<div style="left:502px;top:383px;width:12px;height:1px;background:#857652;"></div>
<div style="left:502px;top:383px;width:1px;height:12px;background:#857652;"></div>
<div style="left:502px;top:395px;width:13px;height:1px;background:#FFE7A4;"></div>
<div style="left:514px;top:383px;width:1px;height:13px;background:#FFE7A4;"></div>
<div style="left:503px;top:384px;width:10px;height:1px;background:#000000;"></div>
<div style="left:503px;top:384px;width:1px;height:10px;background:#000000;"></div>
<div style="left:503px;top:394px;width:11px;height:1px;background:#F4DA96;"></div>
<div style="left:513px;top:384px;width:1px;height:11px;background:#F4DA96;"></div>
<svg style="left:505px;top:386px" width="7" height="7" shape-rendering="crispEdges"><path d="M6 0h1v3h-1v1h-1v1h-1v1h-1v1h-1v-1h-1v-1h-1v-3h1v1h1v1h1v-1h1v-1h1v-1h1z" fill="#000"/></svg>
<div class="t" style="left:520px;top:384px;color:#000;font:12px/13px 'Liberation Sans',sans-serif;letter-spacing:-0.7px;">Show read speed</div>
<div style="left:502px;top:399px;width:13px;height:13px;background:#C5B386;"></div>
<div style="left:502px;top:399px;width:12px;height:1px;background:#857652;"></div>
<div style="left:502px;top:399px;width:1px;height:12px;background:#857652;"></div>
<div style="left:502px;top:411px;width:13px;height:1px;background:#FFE7A4;"></div>
<div style="left:514px;top:399px;width:1px;height:13px;background:#FFE7A4;"></div>
<div style="left:503px;top:400px;width:10px;height:1px;background:#000000;"></div>
<div style="left:503px;top:400px;width:1px;height:10px;background:#000000;"></div>
<div style="left:503px;top:410px;width:11px;height:1px;background:#F4DA96;"></div>
<div style="left:513px;top:400px;width:1px;height:11px;background:#F4DA96;"></div>
<svg style="left:505px;top:402px" width="7" height="7" shape-rendering="crispEdges"><path d="M6 0h1v3h-1v1h-1v1h-1v1h-1v1h-1v-1h-1v-1h-1v-3h1v1h1v1h1v-1h1v-1h1v-1h1z" fill="#857652"/></svg>
<div class="t" style="left:521px;top:401px;color:#FFE7A4;font:12px/13px 'Liberation Sans',sans-serif;letter-spacing:-0.7px;">Show write speed</div>
<div class="t" style="left:520px;top:400px;color:#857652;font:12px/13px 'Liberation Sans',sans-serif;letter-spacing:-0.7px;">Show write speed</div>
<div style="left:491px;top:424px;width:138px;height:1px;background:#857652;"></div>
<div style="left:491px;top:424px;width:1px;height:25px;background:#857652;"></div>
<div style="left:491px;top:449px;width:139px;height:1px;background:#857652;"></div>
<div style="left:629px;top:424px;width:1px;height:26px;background:#857652;"></div>
<div style="left:492px;top:425px;width:137px;height:1px;background:#FFE7A4;"></div>
<div style="left:492px;top:425px;width:1px;height:24px;background:#FFE7A4;"></div>
<div style="left:491px;top:450px;width:140px;height:1px;background:#FFE7A4;"></div>
<div style="left:630px;top:424px;width:1px;height:27px;background:#FFE7A4;"></div>
<div class="t" style="left:502px;top:432px;color:#000;font:12px/13px 'Liberation Sans',sans-serif;letter-spacing:-0.7px;">Quality score:</div>
<div class="t" style="right:21px;top:432px;color:#000080;font:12px/13px 'Liberation Sans',sans-serif;letter-spacing:-0.7px;">93</div>
<div style="left:491px;top:456px;width:138px;height:1px;background:#857652;"></div>
<div style="left:491px;top:456px;width:1px;height:55px;background:#857652;"></div>
<div style="left:491px;top:511px;width:139px;height:1px;background:#857652;"></div>
<div style="left:629px;top:456px;width:1px;height:56px;background:#857652;"></div>
<div style="left:492px;top:457px;width:137px;height:1px;background:#FFE7A4;"></div>
<div style="left:492px;top:457px;width:1px;height:54px;background:#FFE7A4;"></div>
<div style="left:491px;top:512px;width:140px;height:1px;background:#FFE7A4;"></div>
<div style="left:630px;top:456px;width:1px;height:57px;background:#FFE7A4;"></div>
<div class="t" style="left:502px;top:466px;color:#000;font:12px/13px 'Liberation Sans',sans-serif;letter-spacing:-0.7px;">Progress:</div>
<div class="t" style="right:20px;top:466px;color:#000080;font:12px/13px 'Liberation Sans',sans-serif;letter-spacing:-0.7px;">100 %</div>
<div class="t" style="left:502px;top:482px;color:#000;font:12px/13px 'Liberation Sans',sans-serif;letter-spacing:-0.7px;">Position:</div>
<div class="t" style="right:20px;top:482px;color:#000080;font:12px/13px 'Liberation Sans',sans-serif;letter-spacing:-0.7px;">4475 MB</div>
<div class="t" style="left:502px;top:497px;color:#000;font:12px/13px 'Liberation Sans',sans-serif;letter-spacing:-0.7px;">Speed:</div>
<div class="t" style="right:20px;top:497px;color:#000080;font:12px/13px 'Liberation Sans',sans-serif;letter-spacing:-0.7px;">5.05 X</div>
<div style="left:14px;top:456px;width:145px;height:1px;background:#857652;"></div>
<div style="left:14px;top:456px;width:1px;height:55px;background:#857652;"></div>
<div style="left:14px;top:511px;width:146px;height:1px;background:#857652;"></div>
<div style="left:159px;top:456px;width:1px;height:56px;background:#857652;"></div>
<div style="left:15px;top:457px;width:144px;height:1px;background:#FFE7A4;"></div>
<div style="left:15px;top:457px;width:1px;height:54px;background:#FFE7A4;"></div>
<div style="left:14px;top:512px;width:147px;height:1px;background:#FFE7A4;"></div>
<div style="left:160px;top:456px;width:1px;height:57px;background:#FFE7A4;"></div>
<div style="left:23px;top:454px;width:54px;height:6px;background:#C5B386;"></div>
<div style="left:24px;top:453px;width:8px;height:8px;background:#000000;"></div>
<div style="left:25px;top:454px;width:6px;height:6px;background:#00FFFF;"></div>
<div class="t" style="left:35px;top:451px;color:#000;font:12px/13px 'Liberation Sans',sans-serif;letter-spacing:-0.7px;">PI Errors</div>
<div class="t" style="left:22px;top:467px;color:#000;font:12px/13px 'Liberation Sans',sans-serif;letter-spacing:-0.7px;">Average:</div>
<div class="t" style="right:492px;top:467px;color:#000080;font:12px/13px 'Liberation Sans',sans-serif;letter-spacing:-0.7px;">15.24</div>
<div class="t" style="left:22px;top:482px;color:#000;font:12px/13px 'Liberation Sans',sans-serif;letter-spacing:-0.7px;">Maximum:</div>
<div class="t" style="right:492px;top:482px;color:#000080;font:12px/13px 'Liberation Sans',sans-serif;letter-spacing:-0.7px;">170</div>
<div class="t" style="left:23px;top:497px;color:#000;font:12px/13px 'Liberation Sans',sans-serif;letter-spacing:-0.7px;">Total:</div>
<div class="t" style="right:492px;top:497px;color:#000080;font:12px/13px 'Liberation Sans',sans-serif;letter-spacing:-0.7px;">189728</div>
<div style="left:172px;top:456px;width:145px;height:1px;background:#857652;"></div>
<div style="left:172px;top:456px;width:1px;height:55px;background:#857652;"></div>
<div style="left:172px;top:511px;width:146px;height:1px;background:#857652;"></div>
<div style="left:317px;top:456px;width:1px;height:56px;background:#857652;"></div>
<div style="left:173px;top:457px;width:144px;height:1px;background:#FFE7A4;"></div>
<div style="left:173px;top:457px;width:1px;height:54px;background:#FFE7A4;"></div>
<div style="left:172px;top:512px;width:147px;height:1px;background:#FFE7A4;"></div>
<div style="left:318px;top:456px;width:1px;height:57px;background:#FFE7A4;"></div>
<div style="left:181px;top:454px;width:58px;height:6px;background:#C5B386;"></div>
<div style="left:182px;top:453px;width:8px;height:8px;background:#000000;"></div>
<div style="left:183px;top:454px;width:6px;height:6px;background:#FFFF00;"></div>
<div class="t" style="left:193px;top:451px;color:#000;font:12px/13px 'Liberation Sans',sans-serif;letter-spacing:-0.7px;">PI Failures</div>
<div class="t" style="left:180px;top:467px;color:#000;font:12px/13px 'Liberation Sans',sans-serif;letter-spacing:-0.7px;">Average:</div>
<div class="t" style="right:333px;top:467px;color:#000080;font:12px/13px 'Liberation Sans',sans-serif;letter-spacing:-0.7px;">0.02</div>
<div class="t" style="left:180px;top:482px;color:#000;font:12px/13px 'Liberation Sans',sans-serif;letter-spacing:-0.7px;">Maximum:</div>
<div class="t" style="right:333px;top:482px;color:#000080;font:12px/13px 'Liberation Sans',sans-serif;letter-spacing:-0.7px;">3</div>
<div class="t" style="left:181px;top:497px;color:#000;font:12px/13px 'Liberation Sans',sans-serif;letter-spacing:-0.7px;">Total:</div>
<div class="t" style="right:333px;top:497px;color:#000080;font:12px/13px 'Liberation Sans',sans-serif;letter-spacing:-0.7px;">258</div>
<div style="left:331px;top:456px;width:145px;height:1px;background:#857652;"></div>
<div style="left:331px;top:456px;width:1px;height:42px;background:#857652;"></div>
<div style="left:331px;top:498px;width:146px;height:1px;background:#857652;"></div>
<div style="left:476px;top:456px;width:1px;height:43px;background:#857652;"></div>
<div style="left:332px;top:457px;width:144px;height:1px;background:#FFE7A4;"></div>
<div style="left:332px;top:457px;width:1px;height:41px;background:#FFE7A4;"></div>
<div style="left:331px;top:499px;width:147px;height:1px;background:#FFE7A4;"></div>
<div style="left:477px;top:456px;width:1px;height:44px;background:#FFE7A4;"></div>
<div style="left:340px;top:454px;width:34px;height:6px;background:#C5B386;"></div>
<div style="left:341px;top:453px;width:8px;height:8px;background:#000000;"></div>
<div style="left:342px;top:454px;width:6px;height:6px;background:#FF00FF;"></div>
<div class="t" style="left:352px;top:451px;color:#000;font:12px/13px 'Liberation Sans',sans-serif;letter-spacing:-0.7px;">Jitter</div>
<div class="t" style="left:340px;top:467px;color:#000;font:12px/13px 'Liberation Sans',sans-serif;letter-spacing:-0.7px;">Average:</div>
<div class="t" style="right:174px;top:467px;color:#000080;font:12px/13px 'Liberation Sans',sans-serif;letter-spacing:-0.7px;">-</div>
<div class="t" style="left:340px;top:482px;color:#000;font:12px/13px 'Liberation Sans',sans-serif;letter-spacing:-0.7px;">Maximum:</div>
<div class="t" style="right:174px;top:482px;color:#000080;font:12px/13px 'Liberation Sans',sans-serif;letter-spacing:-0.7px;">-</div>
<div class="t" style="left:340px;top:501px;color:#000;font:12px/13px 'Liberation Sans',sans-serif;letter-spacing:-0.7px;">PO failures:</div>
<div class="t" style="right:174px;top:501px;color:#000080;font:12px/13px 'Liberation Sans',sans-serif;letter-spacing:-0.7px;">-</div>
</body></html>
